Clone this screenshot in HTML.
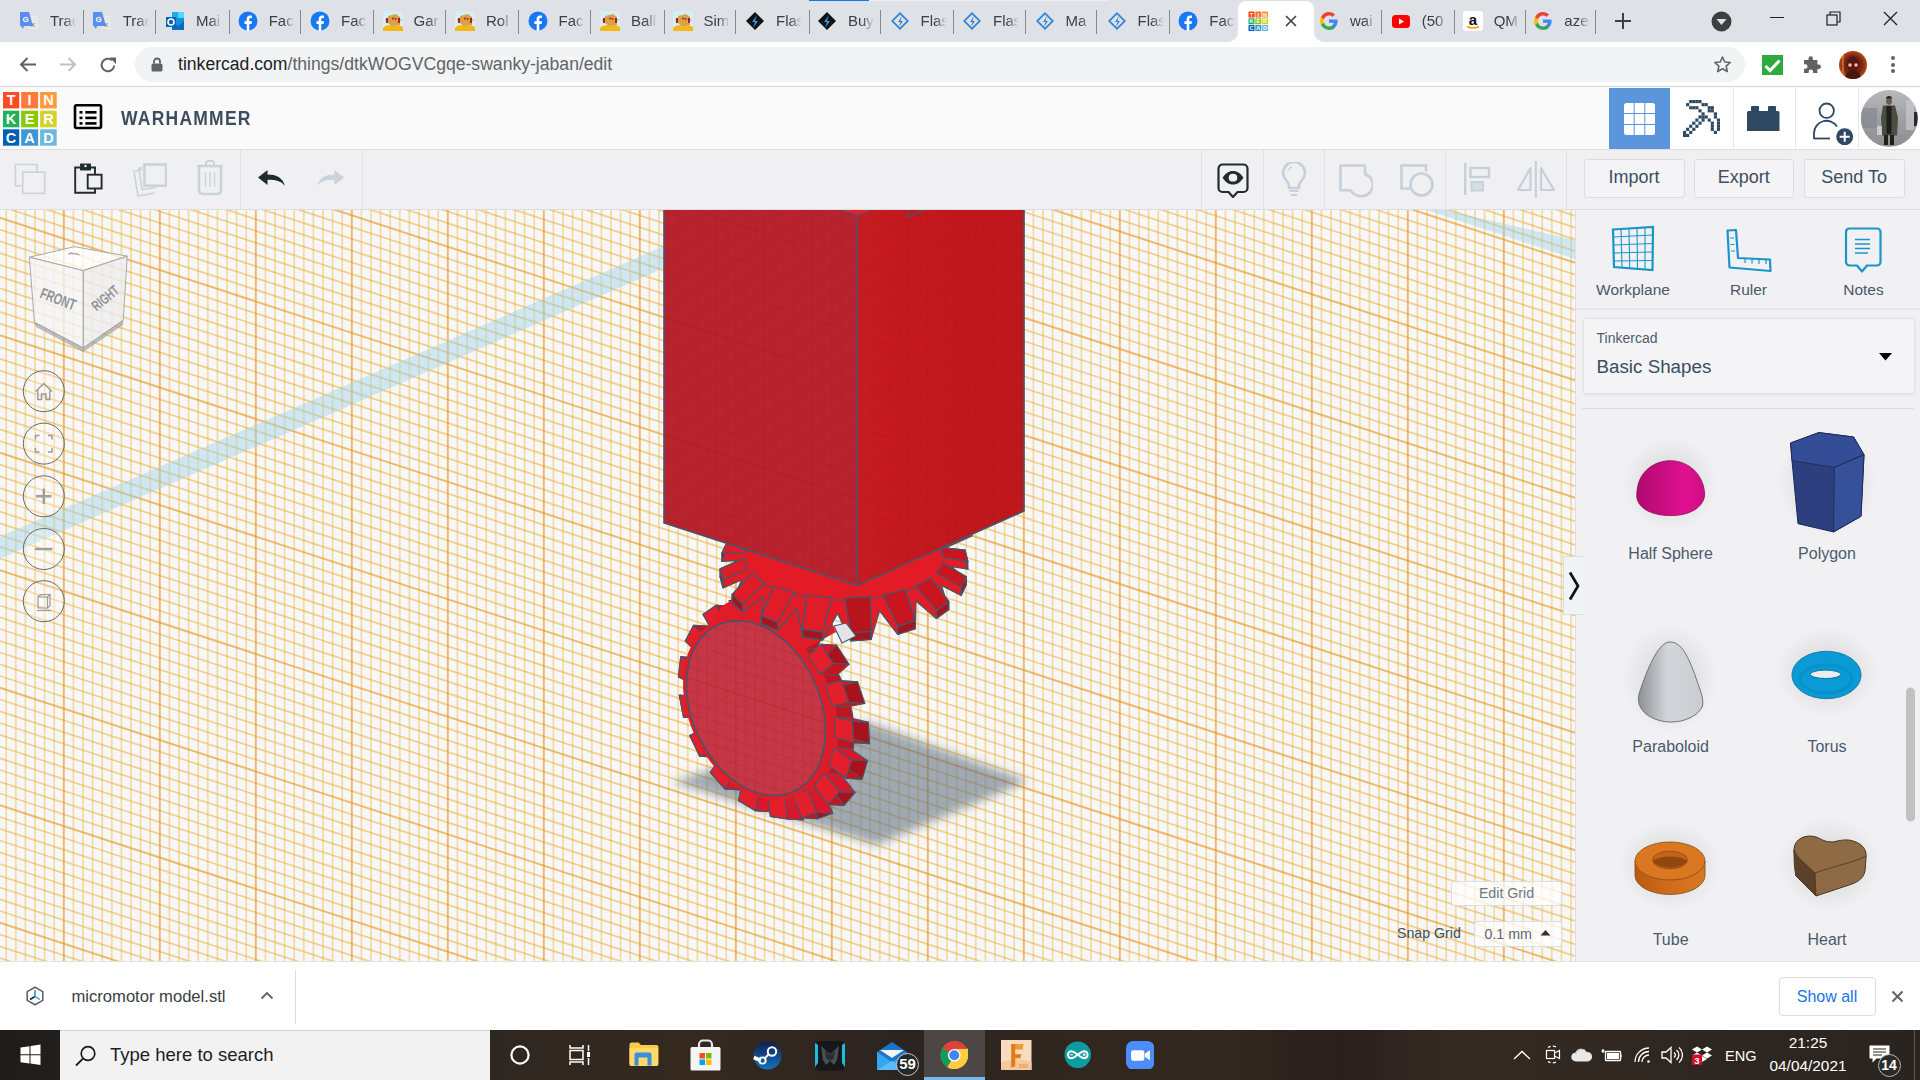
<!DOCTYPE html>
<html><head><meta charset="utf-8">
<style>
*{box-sizing:border-box}
html,body{margin:0;padding:0;width:1920px;height:1080px;overflow:hidden;background:#fff;font-family:"Liberation Sans",sans-serif;position:relative}
.abs{position:absolute}
#tabs{position:absolute;left:0;top:0;width:1920px;height:42px;background:#DEE1E6}
.tab{position:absolute;top:0;height:42px}
.tab .ic{position:absolute;left:9px;top:11px;width:20px;height:20px}
.tab .tx{position:absolute;left:40px;top:12px;font-size:15px;color:#3C4043;white-space:nowrap;width:26px;overflow:hidden;
 -webkit-mask-image:linear-gradient(90deg,#000 55%,transparent 100%)}
.sep{position:absolute;top:10px;width:1px;height:24px;background:#868A8E}
#omni{position:absolute;left:0;top:42px;width:1920px;height:45px;background:#fff;border-bottom:1px solid #D3D5D9}
#tch{position:absolute;left:0;top:88px;width:1920px;height:62px;background:#FAFAFA;border-bottom:1px solid #DDDFE3;box-shadow:0 1px 3px rgba(0,0,0,0.08)}
#tbar{position:absolute;left:0;top:150px;width:1920px;height:60px;background:#F0F0F3;border-bottom:1px solid #DCDDE2}
#vp{position:absolute;left:0;top:210px;width:1575px;height:751px;overflow:hidden}
#rp{position:absolute;left:1575px;top:210px;width:345px;height:751px;background:#F1F1F4;border-left:1px solid #E0E0E4;overflow:hidden}
#dl{position:absolute;left:0;top:961px;width:1920px;height:69px;background:#fff;border-top:1px solid #E3E3E3}
#task{position:absolute;left:0;top:1030px;width:1920px;height:50px;background:linear-gradient(90deg,#1F1C1A 0px,#221E1B 60px,#2E2620 490px,#35291F 700px,#2C2420 900px,#33281F 1200px,#2A211E 1340px,#342A22 1460px,#2E2620 1700px,#2A2420 1920px)}
</style></head><body>
<style>
.btn{position:absolute;border:1px solid #DCDDE2;border-radius:3px;background:#F4F4F6;color:#3D4D60;font-size:18px;text-align:center;line-height:34px;white-space:nowrap}
.lbl{font-size:15.5px;color:#4A5868;text-align:center;line-height:20px;white-space:nowrap}
.lbl2{font-size:16px;color:#4A5A6B;text-align:center;line-height:20px;white-space:nowrap}
</style>
<div id="tabs">
<svg class="abs" style="left:1226px;top:0" width="100" height="42" viewBox="0 0 100 42"><path d="M0 42c8 0 12-4 12-12V10C12 4 15 1 21 1h58c6 0 9 3 9 9v20c0 8 4 12 12 12z" fill="#fff"/></svg>
<div class="abs" style="left:868.5px;top:0;width:240.5px;height:1px;background:#EDEEF0"></div>
<div class="abs" style="left:809px;top:0;width:59.5px;height:1.2px;background:#1A73E8"></div>
<div class="tab" style="left:10.0px;width:60px"><svg class="ic" viewBox="0 0 20 20"><rect x="9" y="5" width="10" height="13" fill="#E8E8E8"/><text x="14" y="16" font-size="8" fill="#777" text-anchor="middle" font-family="Liberation Sans">x</text><path d="M1 1h9l4 14H5l-1 3-2-3H1z" fill="#5A8DEE"/><text x="6.5" y="11" font-size="8" font-weight="bold" fill="#fff" text-anchor="middle" font-family="Liberation Sans">G</text></svg><div class="tx">Trac</div></div>
<div class="tab" style="left:82.7px;width:60px"><svg class="ic" viewBox="0 0 20 20"><rect x="9" y="5" width="10" height="13" fill="#E8E8E8"/><text x="14" y="16" font-size="8" fill="#777" text-anchor="middle" font-family="Liberation Sans">x</text><path d="M1 1h9l4 14H5l-1 3-2-3H1z" fill="#5A8DEE"/><text x="6.5" y="11" font-size="8" font-weight="bold" fill="#fff" text-anchor="middle" font-family="Liberation Sans">G</text></svg><div class="tx">Trac</div></div>
<div class="tab" style="left:156.0px;width:60px"><svg class="ic" viewBox="0 0 20 20"><rect x="7" y="1" width="12" height="18" fill="#1490DF"/><rect x="13" y="1" width="6" height="6" fill="#50D9FF"/><rect x="7" y="1" width="6" height="6" fill="#28A8EA"/><path d="M7 10l6 5 6-5v9H7z" fill="#0A6CC2"/><rect x="1" y="6" width="10" height="10" fill="#0364B8"/><circle cx="6" cy="11" r="3" fill="none" stroke="#fff" stroke-width="1.6"/></svg><div class="tx">Mai</div></div>
<div class="tab" style="left:228.7px;width:60px"><svg class="ic" viewBox="0 0 20 20"><circle cx="10" cy="10" r="9.5" fill="#1877F2"/><path d="M11.3 20v-7h2.3l.4-2.8h-2.7V8.5c0-.8.3-1.4 1.4-1.4H14V4.6c-.3 0-1.1-.1-2-.1-2 0-3.4 1.2-3.4 3.5v2.2H6.4V13h2.3v7z" fill="#fff"/></svg><div class="tx">Fac</div></div>
<div class="tab" style="left:301.0px;width:60px"><svg class="ic" viewBox="0 0 20 20"><circle cx="10" cy="10" r="9.5" fill="#1877F2"/><path d="M11.3 20v-7h2.3l.4-2.8h-2.7V8.5c0-.8.3-1.4 1.4-1.4H14V4.6c-.3 0-1.1-.1-2-.1-2 0-3.4 1.2-3.4 3.5v2.2H6.4V13h2.3v7z" fill="#fff"/></svg><div class="tx">Fac</div></div>
<div class="tab" style="left:373.6px;width:60px"><svg class="ic" viewBox="0 0 20 20"><rect x="0" y="0" width="20" height="20" rx="3" fill="#D6EEF8"/><path d="M0 17c3-4 15-4 20-1v4H0z" fill="#F4B71A"/><path d="M5 5l8-2 4 3 0 8-8 1-4-3z" fill="#D8A24A"/><circle cx="10" cy="7.5" r="1" fill="#B22"/><circle cx="12.5" cy="8" r="1" fill="#B22"/><path d="M2 9h3M15 9h4" stroke="#999" stroke-width="0.8"/><path d="M3 7v5h2V7z" fill="#B01E1E"/><path d="M15 7v5h2V7z" fill="#B01E1E"/></svg><div class="tx">Gar</div></div>
<div class="tab" style="left:446.0px;width:60px"><svg class="ic" viewBox="0 0 20 20"><rect x="0" y="0" width="20" height="20" rx="3" fill="#D6EEF8"/><path d="M0 17c3-4 15-4 20-1v4H0z" fill="#F4B71A"/><path d="M5 5l8-2 4 3 0 8-8 1-4-3z" fill="#D8A24A"/><circle cx="10" cy="7.5" r="1" fill="#B22"/><circle cx="12.5" cy="8" r="1" fill="#B22"/><path d="M2 9h3M15 9h4" stroke="#999" stroke-width="0.8"/><path d="M3 7v5h2V7z" fill="#B01E1E"/><path d="M15 7v5h2V7z" fill="#B01E1E"/></svg><div class="tx">Rol</div></div>
<div class="tab" style="left:518.5px;width:60px"><svg class="ic" viewBox="0 0 20 20"><circle cx="10" cy="10" r="9.5" fill="#1877F2"/><path d="M11.3 20v-7h2.3l.4-2.8h-2.7V8.5c0-.8.3-1.4 1.4-1.4H14V4.6c-.3 0-1.1-.1-2-.1-2 0-3.4 1.2-3.4 3.5v2.2H6.4V13h2.3v7z" fill="#fff"/></svg><div class="tx">Fac</div></div>
<div class="tab" style="left:591.0px;width:60px"><svg class="ic" viewBox="0 0 20 20"><rect x="0" y="0" width="20" height="20" rx="3" fill="#D6EEF8"/><path d="M0 17c3-4 15-4 20-1v4H0z" fill="#F4B71A"/><path d="M5 5l8-2 4 3 0 8-8 1-4-3z" fill="#D8A24A"/><circle cx="10" cy="7.5" r="1" fill="#B22"/><circle cx="12.5" cy="8" r="1" fill="#B22"/><path d="M2 9h3M15 9h4" stroke="#999" stroke-width="0.8"/><path d="M3 7v5h2V7z" fill="#B01E1E"/><path d="M15 7v5h2V7z" fill="#B01E1E"/></svg><div class="tx">Ball</div></div>
<div class="tab" style="left:663.5px;width:60px"><svg class="ic" viewBox="0 0 20 20"><rect x="0" y="0" width="20" height="20" rx="3" fill="#D6EEF8"/><path d="M0 17c3-4 15-4 20-1v4H0z" fill="#F4B71A"/><path d="M5 5l8-2 4 3 0 8-8 1-4-3z" fill="#D8A24A"/><circle cx="10" cy="7.5" r="1" fill="#B22"/><circle cx="12.5" cy="8" r="1" fill="#B22"/><path d="M2 9h3M15 9h4" stroke="#999" stroke-width="0.8"/><path d="M3 7v5h2V7z" fill="#B01E1E"/><path d="M15 7v5h2V7z" fill="#B01E1E"/></svg><div class="tx">Sim</div></div>
<div class="tab" style="left:736.0px;width:60px"><svg class="ic" viewBox="0 0 20 20"><path d="M10 1l9 9-9 9-9-9z" fill="#111"/><path d="M12 4l-5 7h3l-2 6 5-7h-3z" fill="#3A9BE8"/></svg><div class="tx">Flas</div></div>
<div class="tab" style="left:808.0px;width:60px"><svg class="ic" viewBox="0 0 20 20"><path d="M10 1l9 9-9 9-9-9z" fill="#111"/><path d="M12 4l-5 7h3l-2 6 5-7h-3z" fill="#3A9BE8"/></svg><div class="tx">Buy</div></div>
<div class="tab" style="left:880.5px;width:60px"><svg class="ic" viewBox="0 0 20 20"><path d="M10 1l9 9-9 9-9-9z" fill="#2F86D6"/><path d="M10 3.5l6.5 6.5-6.5 6.5-6.5-6.5z" fill="#DEE1E6"/><path d="M12 5l-4 6h2.5l-1.5 5 4-6h-2.5z" fill="#2F86D6"/></svg><div class="tx">Flas</div></div>
<div class="tab" style="left:953.0px;width:60px"><svg class="ic" viewBox="0 0 20 20"><path d="M10 1l9 9-9 9-9-9z" fill="#2F86D6"/><path d="M10 3.5l6.5 6.5-6.5 6.5-6.5-6.5z" fill="#DEE1E6"/><path d="M12 5l-4 6h2.5l-1.5 5 4-6h-2.5z" fill="#2F86D6"/></svg><div class="tx">Flas</div></div>
<div class="tab" style="left:1025.6px;width:60px"><svg class="ic" viewBox="0 0 20 20"><path d="M10 1l9 9-9 9-9-9z" fill="#2F86D6"/><path d="M10 3.5l6.5 6.5-6.5 6.5-6.5-6.5z" fill="#DEE1E6"/><path d="M12 5l-4 6h2.5l-1.5 5 4-6h-2.5z" fill="#2F86D6"/></svg><div class="tx">Ma</div></div>
<div class="tab" style="left:1097.5px;width:60px"><svg class="ic" viewBox="0 0 20 20"><path d="M10 1l9 9-9 9-9-9z" fill="#2F86D6"/><path d="M10 3.5l6.5 6.5-6.5 6.5-6.5-6.5z" fill="#DEE1E6"/><path d="M12 5l-4 6h2.5l-1.5 5 4-6h-2.5z" fill="#2F86D6"/></svg><div class="tx">Flas</div></div>
<div class="tab" style="left:1169.3px;width:60px"><svg class="ic" viewBox="0 0 20 20"><circle cx="10" cy="10" r="9.5" fill="#1877F2"/><path d="M11.3 20v-7h2.3l.4-2.8h-2.7V8.5c0-.8.3-1.4 1.4-1.4H14V4.6c-.3 0-1.1-.1-2-.1-2 0-3.4 1.2-3.4 3.5v2.2H6.4V13h2.3v7z" fill="#fff"/></svg><div class="tx">Fac</div></div>
<div class="tab" style="left:1239px;width:60px"><svg class="ic" viewBox="0 0 20 20"><rect x="0.5" y="0.5" width="6" height="6" rx="0.6" fill="#F73A14"/><text x="3.5" y="5.5" font-size="5.6" font-weight="bold" fill="#fff" text-anchor="middle" font-family="Liberation Sans">T</text><rect x="7.3" y="0.5" width="6" height="6" rx="0.6" fill="#FF6F2A"/><text x="10.3" y="5.5" font-size="5.6" font-weight="bold" fill="#fff" text-anchor="middle" font-family="Liberation Sans">I</text><rect x="14.1" y="0.5" width="6" height="6" rx="0.6" fill="#FF9430"/><text x="17.1" y="5.5" font-size="5.6" font-weight="bold" fill="#fff" text-anchor="middle" font-family="Liberation Sans">N</text><rect x="0.5" y="7.3" width="6" height="6" rx="0.6" fill="#1DAE58"/><text x="3.5" y="12.3" font-size="5.6" font-weight="bold" fill="#fff" text-anchor="middle" font-family="Liberation Sans">K</text><rect x="7.3" y="7.3" width="6" height="6" rx="0.6" fill="#88C900"/><text x="10.3" y="12.3" font-size="5.6" font-weight="bold" fill="#fff" text-anchor="middle" font-family="Liberation Sans">E</text><rect x="14.1" y="7.3" width="6" height="6" rx="0.6" fill="#CCD31E"/><text x="17.1" y="12.3" font-size="5.6" font-weight="bold" fill="#fff" text-anchor="middle" font-family="Liberation Sans">R</text><rect x="0.5" y="14.1" width="6" height="6" rx="0.6" fill="#0059B5"/><text x="3.5" y="19.1" font-size="5.6" font-weight="bold" fill="#fff" text-anchor="middle" font-family="Liberation Sans">C</text><rect x="7.3" y="14.1" width="6" height="6" rx="0.6" fill="#3D94D6"/><text x="10.3" y="19.1" font-size="5.6" font-weight="bold" fill="#fff" text-anchor="middle" font-family="Liberation Sans">A</text><rect x="14.1" y="14.1" width="6" height="6" rx="0.6" fill="#5EB5E3"/><text x="17.1" y="19.1" font-size="5.6" font-weight="bold" fill="#fff" text-anchor="middle" font-family="Liberation Sans">D</text></svg></div>
<svg class="abs" style="left:1284px;top:14px" width="14" height="14" viewBox="0 0 14 14"><path d="M2 2l10 10M12 2L2 12" stroke="#3C4043" stroke-width="1.6"/></svg>
<div class="tab" style="left:1310.0px;width:60px"><svg class="ic" viewBox="0 0 20 20"><path d="M18.6 10.2c0-.6-.1-1.2-.2-1.7H10v3.3h4.8c-.2 1.1-.8 2-1.8 2.6v2.2h2.9c1.7-1.6 2.7-3.9 2.7-6.4z" fill="#4285F4"/><path d="M10 19c2.4 0 4.5-.8 5.9-2.2L13 14.6c-.8.5-1.8.9-3 .9-2.3 0-4.3-1.6-5-3.7H2v2.3C3.5 17 6.5 19 10 19z" fill="#34A853"/><path d="M5 11.8c-.2-.5-.3-1.1-.3-1.8s.1-1.2.3-1.8V5.9H2C1.4 7.1 1 8.5 1 10s.4 2.9 1 4.1z" fill="#FBBC05"/><path d="M10 4.6c1.3 0 2.5.5 3.4 1.3L16 3.4C14.5 1.9 12.4 1 10 1 6.5 1 3.5 3 2 5.9l3 2.3c.7-2.1 2.7-3.6 5-3.6z" fill="#EA4335"/></svg><div class="tx">wai</div></div>
<div class="tab" style="left:1381.7px;width:60px"><svg class="ic" viewBox="0 0 20 20"><rect x="1" y="4" width="18" height="13" rx="3.5" fill="#F00"/><path d="M8 7.5v6l5-3z" fill="#fff"/></svg><div class="tx">(50</div></div>
<div class="tab" style="left:1453.7px;width:60px"><svg class="ic" viewBox="0 0 20 20"><rect x="0" y="0" width="20" height="20" rx="3" fill="#fff"/><text x="10" y="13.5" font-size="15" font-weight="bold" fill="#111" text-anchor="middle" font-family="Liberation Sans">a</text><path d="M4 15.5q6 3 12 0" stroke="#F90" stroke-width="1.6" fill="none"/></svg><div class="tx">QM</div></div>
<div class="tab" style="left:1524.3px;width:60px"><svg class="ic" viewBox="0 0 20 20"><path d="M18.6 10.2c0-.6-.1-1.2-.2-1.7H10v3.3h4.8c-.2 1.1-.8 2-1.8 2.6v2.2h2.9c1.7-1.6 2.7-3.9 2.7-6.4z" fill="#4285F4"/><path d="M10 19c2.4 0 4.5-.8 5.9-2.2L13 14.6c-.8.5-1.8.9-3 .9-2.3 0-4.3-1.6-5-3.7H2v2.3C3.5 17 6.5 19 10 19z" fill="#34A853"/><path d="M5 11.8c-.2-.5-.3-1.1-.3-1.8s.1-1.2.3-1.8V5.9H2C1.4 7.1 1 8.5 1 10s.4 2.9 1 4.1z" fill="#FBBC05"/><path d="M10 4.6c1.3 0 2.5.5 3.4 1.3L16 3.4C14.5 1.9 12.4 1 10 1 6.5 1 3.5 3 2 5.9l3 2.3c.7-2.1 2.7-3.6 5-3.6z" fill="#EA4335"/></svg><div class="tx">aze</div></div>
<div class="sep" style="left:82.8px"></div>
<div class="sep" style="left:155.2px"></div>
<div class="sep" style="left:228.5px"></div>
<div class="sep" style="left:300.2px"></div>
<div class="sep" style="left:372.8px"></div>
<div class="sep" style="left:445.2px"></div>
<div class="sep" style="left:517.8px"></div>
<div class="sep" style="left:590.2px"></div>
<div class="sep" style="left:663.5px"></div>
<div class="sep" style="left:735.2px"></div>
<div class="sep" style="left:808.5px"></div>
<div class="sep" style="left:880.2px"></div>
<div class="sep" style="left:952.8px"></div>
<div class="sep" style="left:1025.2px"></div>
<div class="sep" style="left:1096.2px"></div>
<div class="sep" style="left:1168.5px"></div>
<div class="sep" style="left:1381.2px"></div>
<div class="sep" style="left:1453.5px"></div>
<div class="sep" style="left:1524.5px"></div>
<div class="sep" style="left:1594.5px"></div>
<svg class="abs" style="left:1613px;top:11px" width="20" height="20" viewBox="0 0 20 20"><path d="M10 2v16M2 10h16" stroke="#3C4043" stroke-width="2"/></svg>
<svg class="abs" style="left:1711px;top:11px" width="21" height="21" viewBox="0 0 21 21"><circle cx="10.5" cy="10.5" r="10" fill="#3C4043"/><path d="M5.5 8h10l-5 6z" fill="#DEE1E6"/></svg>
<div class="abs" style="left:1770px;top:17px;width:14px;height:1px;background:#202124"></div>
<svg class="abs" style="left:1826px;top:11px" width="15" height="15" viewBox="0 0 15 15"><rect x="1" y="4" width="10" height="10" fill="none" stroke="#202124" stroke-width="1.2"/><path d="M4 4V1h10v10h-3" fill="none" stroke="#202124" stroke-width="1.2"/></svg>
<svg class="abs" style="left:1883px;top:11px" width="15" height="15" viewBox="0 0 15 15"><path d="M1 1l13 13M14 1L1 14" stroke="#202124" stroke-width="1.3"/></svg>
</div><div id="omni">
<svg class="abs" style="left:19px;top:14px" width="18" height="17" viewBox="0 0 18 17"><path d="M17 8.5H2.5M8.5 2L2 8.5 8.5 15" fill="none" stroke="#5F6368" stroke-width="2"/></svg>
<svg class="abs" style="left:59px;top:14px" width="18" height="17" viewBox="0 0 18 17"><path d="M1 8.5h14.5M9.5 2L16 8.5 9.5 15" fill="none" stroke="#BDC1C6" stroke-width="2"/></svg>
<svg class="abs" style="left:99px;top:14px" width="18" height="18" viewBox="0 0 18 18"><path d="M15.2 9.5A6.3 6.3 0 1 1 13 4.2" fill="none" stroke="#5F6368" stroke-width="2"/><path d="M10.5 1.5h6.5v6.5z" fill="#5F6368"/></svg>
<div class="abs" style="left:135px;top:5px;width:1610px;height:35px;border-radius:17.5px;background:#F1F3F4"></div>
<svg class="abs" style="left:151px;top:15px" width="12" height="15" viewBox="0 0 12 15"><path d="M3 6.5V4.5a3 3 0 0 1 6 0v2" fill="none" stroke="#5F6368" stroke-width="1.8"/><rect x="0.5" y="6.5" width="11" height="8" rx="1.5" fill="#5F6368"/></svg>
<div class="abs" style="left:178px;top:10px;font-size:17.6px;color:#5F6368;white-space:nowrap;line-height:24px"><span style="color:#202124">tinkercad.com</span>/things/dtkWOGVCgqe-swanky-jaban/edit</div>
<svg class="abs" style="left:1713px;top:13px" width="19" height="19" viewBox="0 0 24 24"><path d="M12 2.5l2.9 6.3 6.9.7-5.2 4.6 1.5 6.8L12 17.4l-6.1 3.5 1.5-6.8-5.2-4.6 6.9-.7z" fill="none" stroke="#5F6368" stroke-width="2" stroke-linejoin="round"/></svg>
<div class="abs" style="left:1762px;top:12.5px;width:20.5px;height:20.5px;background:#2DAA3C"></div>
<svg class="abs" style="left:1762px;top:12.5px" width="21" height="21" viewBox="0 0 21 21"><path d="M3.5 11l4.5 4.5 9.5-10" fill="none" stroke="#fff" stroke-width="3"/></svg>
<svg class="abs" style="left:1803px;top:13px" width="19" height="19" viewBox="0 0 19 19"><path d="M1 5h4.5V3.5a2.2 2.2 0 0 1 4.4 0V5h4.5v4.5h1.4a2.2 2.2 0 0 1 0 4.4h-1.4V18H10v-1.4a2.2 2.2 0 0 0-4.4 0V18H1v-4.3h1.3a2.2 2.2 0 0 0 0-4.4H1z" fill="#5F6368"/></svg>
<svg class="abs" style="left:1839px;top:8.7px" width="28" height="28" viewBox="0 0 28 28"><defs><clipPath id="pav"><circle cx="14" cy="14" r="14"/></clipPath><radialGradient id="pavg" cx="0.5" cy="0.5" r="0.6"><stop offset="0" stop-color="#5A1A12"/><stop offset="0.55" stop-color="#7A2414"/><stop offset="1" stop-color="#D8641E"/></radialGradient></defs><g clip-path="url(#pav)"><rect width="28" height="28" fill="url(#pavg)"/><rect x="3" y="4" width="2" height="20" fill="#E88A2A" opacity="0.6"/><path d="M6 28c1-7 4-9 8-9s7 2 8 9z" fill="#4A1410"/><ellipse cx="14" cy="13" rx="6" ry="7.5" fill="#4E1A14"/><circle cx="11" cy="14" r="2" fill="#FF6A50"/><circle cx="17" cy="14" r="2" fill="#FF6A50"/><circle cx="11" cy="14" r="1" fill="#FFE0D0"/><circle cx="17" cy="14" r="1" fill="#FFE0D0"/></g></svg>
<div class="abs" style="left:1890.5px;top:14px;width:4px;height:4px;border-radius:50%;background:#5F6368"></div>
<div class="abs" style="left:1890.5px;top:20.7px;width:4px;height:4px;border-radius:50%;background:#5F6368"></div>
<div class="abs" style="left:1890.5px;top:27px;width:4px;height:4px;border-radius:50%;background:#5F6368"></div>
</div>
<div id="tch">
<svg class="abs" style="left:3px;top:4px" width="54" height="54" viewBox="0 0 54 54">
<g font-family="Liberation Sans" font-weight="bold" font-size="14.5" fill="#fff" text-anchor="middle">
<rect x="0" y="0" width="16.2" height="16.4" fill="#FF4A24"/><rect x="18.2" y="0" width="16.9" height="16.4" fill="#FF7A3A"/><rect x="37.1" y="0" width="16.6" height="16.4" fill="#FF9B38"/>
<rect x="0" y="18.7" width="16.2" height="16.6" fill="#20B15A"/><rect x="18.2" y="18.7" width="16.9" height="16.6" fill="#8CC800"/><rect x="37.1" y="18.7" width="16.6" height="16.6" fill="#D2D32C"/>
<rect x="0" y="37.3" width="16.2" height="16.4" fill="#0061B2"/><rect x="18.2" y="37.3" width="16.9" height="16.4" fill="#3D97D3"/><rect x="37.1" y="37.3" width="16.6" height="16.4" fill="#6CB9E0"/>
<text x="8.1" y="13.4">T</text><text x="26.6" y="13.4">I</text><text x="45.4" y="13.4">N</text>
<text x="8.1" y="32.2">K</text><text x="26.6" y="32.2">E</text><text x="45.4" y="32.2">R</text>
<text x="8.1" y="50.6">C</text><text x="26.6" y="50.6">A</text><text x="45.4" y="50.6">D</text>
</g></svg>
<svg class="abs" style="left:73px;top:15px" width="30" height="27" viewBox="0 0 30 27">
<rect x="2" y="2.2" width="26" height="22.8" rx="1.5" fill="none" stroke="#000" stroke-width="2.6"/>
<rect x="6.5" y="8" width="3" height="2.6" fill="#000"/><rect x="12.3" y="8" width="11.2" height="2.6" fill="#000"/>
<rect x="6.5" y="13.6" width="3" height="2.6" fill="#000"/><rect x="12.3" y="13.6" width="11.2" height="2.6" fill="#000"/>
<rect x="6.5" y="19.1" width="3" height="2.6" fill="#000"/><rect x="12.3" y="19.1" width="11.2" height="2.6" fill="#000"/>
</svg>
<div id="title" class="abs" style="left:120.5px;top:17.6px;font-size:20.6px;font-weight:bold;color:#3D4D60;letter-spacing:1.45px;white-space:nowrap;line-height:24px;transform:scaleX(0.85);transform-origin:0 0">WARHAMMER</div>
<div class="abs" style="left:1609px;top:0;width:61px;height:61px;background:#5B95DB"></div>
<div class="abs" style="left:1670px;top:0;width:250px;height:61px;background:#fff"></div>
<svg class="abs" style="left:1624px;top:14.5px" width="31" height="32" viewBox="0 0 31 32"><defs><clipPath id="gc"><rect width="31" height="32" rx="2.5"/></clipPath></defs><g clip-path="url(#gc)" fill="#fff">
<rect x="0" y="0" width="9.7" height="10"/><rect x="10.7" y="0" width="9.6" height="10"/><rect x="21.3" y="0" width="9.7" height="10"/>
<rect x="0" y="11" width="9.7" height="10"/><rect x="10.7" y="11" width="9.6" height="10"/><rect x="21.3" y="11" width="9.7" height="10"/>
<rect x="0" y="22" width="9.7" height="10"/><rect x="10.7" y="22" width="9.6" height="10"/><rect x="21.3" y="22" width="9.7" height="10"/></g></svg>
<svg class="abs" style="left:1683.3px;top:12.2px" width="37" height="37" viewBox="0 0 12 12" fill="#2F4963"><rect x="2" y="0" width="1.02" height="1.02"/><rect x="3" y="0" width="1.02" height="1.02"/><rect x="4" y="0" width="1.02" height="1.02"/><rect x="5" y="0" width="1.02" height="1.02"/><rect x="1" y="1" width="1.02" height="1.02"/><rect x="6" y="1" width="1.02" height="1.02"/><rect x="7" y="1" width="1.02" height="1.02"/><rect x="2" y="2" width="1.02" height="1.02"/><rect x="3" y="2" width="1.02" height="1.02"/><rect x="4" y="2" width="1.02" height="1.02"/><rect x="8" y="2" width="1.02" height="1.02"/><rect x="9" y="2" width="1.02" height="1.02"/><rect x="8" y="3" width="1.02" height="1.02"/><rect x="9" y="3" width="1.02" height="1.02"/><rect x="5" y="3" width="1.02" height="1.02"/><rect x="6" y="4" width="1.02" height="1.02"/><rect x="6" y="5" width="1.02" height="1.02"/><rect x="6" y="6" width="1.02" height="1.02"/><rect x="5" y="5" width="1.02" height="1.02"/><rect x="7" y="5" width="1.02" height="1.02"/><rect x="10" y="4" width="1.02" height="1.02"/><rect x="10" y="5" width="1.02" height="1.02"/><rect x="4" y="6" width="1.02" height="1.02"/><rect x="8" y="6" width="1.02" height="1.02"/><rect x="3" y="7" width="1.02" height="1.02"/><rect x="5" y="7" width="1.02" height="1.02"/><rect x="9" y="7" width="1.02" height="1.02"/><rect x="9" y="8" width="1.02" height="1.02"/><rect x="9" y="9" width="1.02" height="1.02"/><rect x="11" y="6" width="1.02" height="1.02"/><rect x="11" y="7" width="1.02" height="1.02"/><rect x="11" y="8" width="1.02" height="1.02"/><rect x="11" y="9" width="1.02" height="1.02"/><rect x="2" y="8" width="1.02" height="1.02"/><rect x="4" y="8" width="1.02" height="1.02"/><rect x="1" y="9" width="1.02" height="1.02"/><rect x="3" y="9" width="1.02" height="1.02"/><rect x="10" y="10" width="1.02" height="1.02"/><rect x="0" y="10" width="1.02" height="1.02"/><rect x="0" y="11" width="1.02" height="1.02"/><rect x="1" y="11" width="1.02" height="1.02"/><rect x="2" y="10" width="1.02" height="1.02"/></svg>
<svg class="abs" style="left:1747px;top:18px" width="33" height="26" viewBox="0 0 33 26" fill="#2F4963"><path d="M5 0h6a1 1 0 0 1 1 1v4h9V1a1 1 0 0 1 1-1h6a1 1 0 0 1 1 1v4h2a1.5 1.5 0 0 1 1.5 1.5V25H0V6.5A1.5 1.5 0 0 1 1.5 5H4V1a1 1 0 0 1 1-1z"/></svg>
<svg class="abs" style="left:1812px;top:13px" width="42" height="44" viewBox="0 0 42 44">
<circle cx="14.7" cy="9.7" r="7.2" fill="none" stroke="#2F4963" stroke-width="1.8"/>
<path d="M2 38V32a12.5 12.5 0 0 1 23-6.5" fill="none" stroke="#2F4963" stroke-width="1.8"/><path d="M2 37.5h16" stroke="#2F4963" stroke-width="1.8"/>
<circle cx="32.7" cy="35.8" r="8.5" fill="#2F4963"/><path d="M32.7 30.8v10M27.7 35.8h10" stroke="#fff" stroke-width="2"/>
</svg>
<div class="abs" style="left:1733px;top:0;width:1px;height:61px;background:#E4E6EA"></div>
<div class="abs" style="left:1795px;top:0;width:1px;height:61px;background:#E4E6EA"></div>
<div class="abs" style="left:1858px;top:0;width:1px;height:61px;background:#E4E6EA"></div>
<svg class="abs" style="left:1860px;top:1px" width="60" height="60" viewBox="1860 89 60 60"><defs><clipPath id="avc"><circle cx="1889.3" cy="118.4" r="28.4"/></clipPath><linearGradient id="avg" x1="0" y1="0" x2="0" y2="1"><stop offset="0" stop-color="#B8B9BC"/><stop offset="0.55" stop-color="#9C9EA3"/><stop offset="1" stop-color="#8E8C8C"/></linearGradient></defs>
<g clip-path="url(#avc)"><rect x="1860" y="89" width="60" height="60" fill="url(#avg)"/>
<rect x="1861" y="108" width="16" height="20" fill="#7F848C" opacity="0.6"/><rect x="1906" y="100" width="8" height="30" fill="#C8CACC" opacity="0.7"/><rect x="1914" y="112" width="4" height="14" fill="#2A2A2C"/>
<path d="M1883 105.5h12l3 12 -1 18h-4v9h-3v-9h-2v9h-3v-9h-3l-1-18z" fill="#4B4D40"/><path d="M1886.5 106h5v28h-5z" fill="#1E1F1C"/><path d="M1884 135h4v10h-4zM1890 135h4v10h-4z" fill="#1E1F1C"/><ellipse cx="1889" cy="101" rx="3" ry="3.8" fill="#6A5C52"/><path d="M1886 98.5a3 2.5 0 0 1 6 0z" fill="#2A2420"/>
<rect x="1877" y="126" width="5" height="9" fill="#D8D8DA" opacity="0.8"/></g></svg>
</div>
<div id="tbar">
<svg class="abs" style="left:14px;top:13px" width="32" height="32" viewBox="0 0 32 32" fill="none" stroke="#C8D3DC" stroke-width="1.6"><path d="M23 9V1.5H1.5V22.7H8.7"/><rect x="8.7" y="9.2" width="22" height="21.2"/></svg>
<svg class="abs" style="left:74px;top:13px" width="30" height="32" viewBox="0 0 30 32" fill="none" stroke="#1F2B2D" stroke-width="1.9"><path d="M7 4.5H1.2v25.3h19.8V25"/><path d="M16 4.5h5v7"/><rect x="7" y="1.5" width="9" height="5" fill="#1F2B2D"/><circle cx="11.5" cy="3" r="1.2" fill="#F0F0F3" stroke="none"/><rect x="13.7" y="11.7" width="13.9" height="13.8"/></svg>
<svg class="abs" style="left:133px;top:13px" width="34" height="34" viewBox="0 0 34 34" fill="none" stroke="#C8D3DC"><rect x="11.5" y="1.5" width="21.5" height="21.2" stroke-width="2.6"/><path d="M9 6.5L1 8.5l4 24.5 17-3" stroke-width="1.6"/><path d="M9.5 4.5L6 5.5l3 21 14-2" stroke-width="1.6"/></svg>
<svg class="abs" style="left:196px;top:10px" width="28" height="36" viewBox="0 0 28 36" fill="none" stroke="#C8D3DC"><path d="M1 6h26" stroke-width="2.6"/><path d="M10 5V3a2.5 2.5 0 0 1 2.5-2h3A2.5 2.5 0 0 1 18 3v2" stroke-width="1.8"/><path d="M3 7v23.5a3.5 3.5 0 0 0 3.5 3.5h15a3.5 3.5 0 0 0 3.5-3.5V7" stroke-width="2.6"/><path d="M9.5 12v15M14 12v15M18.5 12v15" stroke-width="1.4"/></svg>
<div class="abs" style="left:240px;top:0;width:1px;height:60px;background:#DEE1E5"></div>
<svg class="abs" style="left:258px;top:20px" width="27" height="16" viewBox="0 0 27 16"><path d="M0 7.5L9.5 0v4.5c9 0 15 3 17.5 11.5-3.5-4.5-8-6.2-17.5-6.2V15z" fill="#1F2B2D"/></svg>
<svg class="abs" style="left:317px;top:20px" width="27" height="16" viewBox="0 0 27 16"><path d="M27 7.5L17.5 0v4.5C8.5 4.5 2.5 7.5 0 16c3.5-4.5 8-6.2 17.5-6.2V15z" fill="#C8D3DC"/></svg>
<div class="abs" style="left:362px;top:0;width:1px;height:60px;background:#DEE1E5"></div>
<div class="abs" style="left:1201px;top:0;width:1px;height:60px;background:#DEE1E5"></div>
<svg class="abs" style="left:1217px;top:13px" width="32" height="36" viewBox="0 0 32 36"><path d="M5.5 1.5h21a4 4 0 0 1 4 4v19.5a4 4 0 0 1-4 4h-6L16 34l-4.5-5h-6a4 4 0 0 1-4-4V5.5a4 4 0 0 1 4-4z" fill="none" stroke="#1F2D2F" stroke-width="2.2" stroke-linejoin="round"/><path d="M5.5 14.7C9 9.5 12.5 8 16 8s7 1.5 10.5 6.7C23 20 19.5 21.5 16 21.5S9 20 5.5 14.7z" fill="#1F2D2F"/><ellipse cx="16" cy="14.7" rx="4.3" ry="3.9" fill="#F0F0F3"/></svg>
<div class="abs" style="left:1263px;top:0;width:1px;height:60px;background:#DEE1E5"></div>
<svg class="abs" style="left:1281px;top:12px" width="26" height="36" viewBox="0 0 26 36" fill="none" stroke="#C5D0DA" stroke-width="2.6"><path d="M8 26v-3c0-3-6-6-6-12a11 11 0 0 1 22 0c0 6-6 9-6 12v3z" stroke-linejoin="round"/><path d="M8.5 29h9M10 33h6" stroke-width="1.8"/><path d="M7 8.5a6 6 0 0 1 4-3.5" stroke-width="1.4"/></svg>
<div class="abs" style="left:1324px;top:0;width:1px;height:60px;background:#DEE1E5"></div>
<svg class="abs" style="left:1339px;top:14px" width="34" height="34" viewBox="0 0 34 34" fill="none" stroke="#C5D0DA" stroke-width="2.6"><path d="M1.5 1.5h24.5v8.5a11 11 0 0 1 -7 21.7 11 11 0 0 1-7.5-5.5H1.5z" stroke-linejoin="round"/></svg>
<svg class="abs" style="left:1400px;top:14px" width="34" height="34" viewBox="0 0 34 34" fill="none" stroke="#C5D0DA" stroke-width="2.6"><path d="M10 24.5H1.5V1.5h24.5v6"/><circle cx="21.5" cy="20.5" r="11"/></svg>
<div class="abs" style="left:1445px;top:0;width:1px;height:60px;background:#DEE1E5"></div>
<svg class="abs" style="left:1462px;top:12px" width="30" height="36" viewBox="0 0 30 36" fill="none" stroke="#C5D0DA" stroke-width="2.4"><path d="M3.2 1v32"/><rect x="8.5" y="6" width="18.5" height="9"/><rect x="9.5" y="20" width="11.5" height="8.5" fill="#D5DDE5" stroke-width="2"/></svg>
<svg class="abs" style="left:1516px;top:10px" width="40" height="38" viewBox="0 0 40 38" fill="none" stroke="#C5D0DA" stroke-width="2.2" stroke-linejoin="round"><path d="M19.8 1v37"/><path d="M2 30h12.5V8z"/><path d="M25 30h13L25 8z"/></svg>
<div class="abs" style="left:1566px;top:0;width:1px;height:60px;background:#DEE1E5"></div>
<div class="btn abs" style="left:1583.5px;top:9.4px;width:101px;height:38.6px">Import</div>
<div class="btn abs" style="left:1693.5px;top:9.4px;width:100.5px;height:38.6px">Export</div>
<div class="btn abs" style="left:1803.5px;top:9.4px;width:101.2px;height:38.6px">Send To</div>
</div>
<div id="vp"><svg width="1575" height="751" viewBox="0 210 1575 751" style="position:absolute;left:0;top:0">
<rect x="0" y="210" width="1575" height="751" fill="#F7F7F7"/>
<defs><filter id="gblur" x="0" y="0" width="100%" height="100%"><feGaussianBlur stdDeviation="0.5"/></filter></defs><g id="gl" filter="url(#gblur)">
<path d="M6.2 210V961M15.8 210V961M25.4 210V961M35.0 210V961M44.6 210V961M54.2 210V961M73.4 210V961M83.0 210V961M92.6 210V961M102.2 210V961M111.8 210V961M121.4 210V961M131.0 210V961M140.6 210V961M150.2 210V961M169.4 210V961M179.0 210V961M188.6 210V961M198.2 210V961M207.8 210V961M217.4 210V961M227.0 210V961M236.6 210V961M246.2 210V961M265.4 210V961M275.0 210V961M284.6 210V961M294.2 210V961M303.8 210V961M313.4 210V961M323.0 210V961M332.6 210V961M342.2 210V961M361.4 210V961M371.0 210V961M380.6 210V961M390.2 210V961M399.8 210V961M409.4 210V961M419.0 210V961M428.6 210V961M438.2 210V961M457.4 210V961M467.0 210V961M476.6 210V961M486.2 210V961M495.8 210V961M505.4 210V961M515.0 210V961M524.6 210V961M534.2 210V961M553.4 210V961M563.0 210V961M572.6 210V961M582.2 210V961M591.8 210V961M601.4 210V961M611.0 210V961M620.6 210V961M630.2 210V961M649.4 210V961M659.0 210V961M668.6 210V961M678.2 210V961M687.8 210V961M697.4 210V961M707.0 210V961M716.6 210V961M726.2 210V961M745.4 210V961M755.0 210V961M764.6 210V961M774.2 210V961M783.8 210V961M793.4 210V961M803.0 210V961M812.6 210V961M822.2 210V961M841.4 210V961M851.0 210V961M860.6 210V961M870.2 210V961M879.8 210V961M889.4 210V961M899.0 210V961M908.6 210V961M918.2 210V961M937.4 210V961M947.0 210V961M956.6 210V961M966.2 210V961M975.8 210V961M985.4 210V961M995.0 210V961M1004.6 210V961M1014.2 210V961M1033.4 210V961M1043.0 210V961M1052.6 210V961M1062.2 210V961M1071.8 210V961M1081.4 210V961M1091.0 210V961M1100.6 210V961M1110.2 210V961M1129.4 210V961M1139.0 210V961M1148.6 210V961M1158.2 210V961M1167.8 210V961M1177.4 210V961M1187.0 210V961M1196.6 210V961M1206.2 210V961M1225.4 210V961M1235.0 210V961M1244.6 210V961M1254.2 210V961M1263.8 210V961M1273.4 210V961M1283.0 210V961M1292.6 210V961M1302.2 210V961M1321.4 210V961M1331.0 210V961M1340.6 210V961M1350.2 210V961M1359.8 210V961M1369.4 210V961M1379.0 210V961M1388.6 210V961M1398.2 210V961M1417.4 210V961M1427.0 210V961M1436.6 210V961M1446.2 210V961M1455.8 210V961M1465.4 210V961M1475.0 210V961M1484.6 210V961M1494.2 210V961M1513.4 210V961M1523.0 210V961M1532.6 210V961M1542.2 210V961M1551.8 210V961M1561.4 210V961M1571.0 210V961" stroke="rgba(236,180,66,0.42)" stroke-width="1.8" fill="none"/>
<path d="M0 -299.2L1575 215.8M0 -287.4L1575 227.6M0 -275.7L1575 239.3M0 -263.9L1575 251.1M0 -240.4L1575 274.6M0 -228.7L1575 286.3M0 -216.9L1575 298.1M0 -205.2L1575 309.8M0 -193.4L1575 321.6M0 -181.7L1575 333.3M0 -169.9L1575 345.1M0 -158.2L1575 356.8M0 -146.4L1575 368.6M0 -122.9L1575 392.1M0 -111.2L1575 403.8M0 -99.4L1575 415.6M0 -87.7L1575 427.3M0 -75.9L1575 439.1M0 -64.2L1575 450.8M0 -52.4L1575 462.6M0 -40.7L1575 474.3M0 -28.9L1575 486.1M0 -5.4L1575 509.6M0 6.3L1575 521.3M0 18.1L1575 533.1M0 29.8L1575 544.8M0 41.6L1575 556.6M0 53.3L1575 568.3M0 65.1L1575 580.1M0 76.8L1575 591.8M0 88.6L1575 603.6M0 112.1L1575 627.1M0 123.8L1575 638.8M0 135.6L1575 650.6M0 147.3L1575 662.3M0 159.1L1575 674.1M0 170.8L1575 685.8M0 182.6L1575 697.6M0 194.3L1575 709.3M0 206.1L1575 721.1M0 229.6L1575 744.6M0 241.3L1575 756.3M0 253.1L1575 768.1M0 264.8L1575 779.8M0 276.6L1575 791.6M0 288.3L1575 803.3M0 300.1L1575 815.1M0 311.8L1575 826.8M0 323.6L1575 838.6M0 347.1L1575 862.1M0 358.8L1575 873.8M0 370.6L1575 885.6M0 382.3L1575 897.3M0 394.1L1575 909.1M0 405.8L1575 920.8M0 417.6L1575 932.6M0 429.3L1575 944.3M0 441.1L1575 956.1M0 464.6L1575 979.6M0 476.3L1575 991.3M0 488.1L1575 1003.1M0 499.8L1575 1014.8M0 511.6L1575 1026.6M0 523.3L1575 1038.3M0 535.0L1575 1050.1M0 546.8L1575 1061.8M0 558.5L1575 1073.6M0 582.0L1575 1097.1M0 593.8L1575 1108.8M0 605.5L1575 1120.6M0 617.3L1575 1132.3M0 629.0L1575 1144.1M0 640.8L1575 1155.8M0 652.5L1575 1167.6M0 664.3L1575 1179.3M0 676.0L1575 1191.1M0 699.5L1575 1214.6M0 711.3L1575 1226.3M0 723.0L1575 1238.1M0 734.8L1575 1249.8M0 746.5L1575 1261.6M0 758.3L1575 1273.3M0 770.0L1575 1285.1M0 781.8L1575 1296.8M0 793.5L1575 1308.6M0 817.0L1575 1332.1M0 828.8L1575 1343.8M0 840.5L1575 1355.6M0 852.3L1575 1367.3M0 864.0L1575 1379.1M0 875.8L1575 1390.8M0 887.5L1575 1402.6M0 899.3L1575 1414.3M0 911.0L1575 1426.1M0 934.5L1575 1449.6M0 946.3L1575 1461.3M0 958.0L1575 1473.1" stroke="rgba(234,172,52,0.52)" stroke-width="1.8" fill="none"/>
<path d="M63.8 210V961M159.8 210V961M255.8 210V961M351.8 210V961M447.8 210V961M543.8 210V961M639.8 210V961M735.8 210V961M831.8 210V961M927.8 210V961M1023.8 210V961M1119.8 210V961M1215.8 210V961M1311.8 210V961M1407.8 210V961M1503.8 210V961" stroke="rgba(230,150,30,0.62)" stroke-width="2" fill="none"/>
<path d="M0 -252.2L1575 262.8M0 -134.7L1575 380.3M0 -17.2L1575 497.8M0 100.3L1575 615.3M0 217.8L1575 732.8M0 335.3L1575 850.3M0 452.8L1575 967.8M0 570.3L1575 1085.3M0 687.8L1575 1202.8M0 805.3L1575 1320.3M0 922.8L1575 1437.8" stroke="rgba(230,150,30,0.62)" stroke-width="2" fill="none"/>
</g>
<polygon points="0,536.5 664,246 664,268 0,558.5" fill="rgba(150,210,235,0.42)"/>
<polygon points="1427,210 1445,210 1575,240 1575,259" fill="rgba(150,210,235,0.42)"/>
</svg>
<svg width="0" height="0" style="position:absolute"><defs><g id="gridlines">
<path d="M6.2 210V961M15.8 210V961M25.4 210V961M35.0 210V961M44.6 210V961M54.2 210V961M73.4 210V961M83.0 210V961M92.6 210V961M102.2 210V961M111.8 210V961M121.4 210V961M131.0 210V961M140.6 210V961M150.2 210V961M169.4 210V961M179.0 210V961M188.6 210V961M198.2 210V961M207.8 210V961M217.4 210V961M227.0 210V961M236.6 210V961M246.2 210V961M265.4 210V961M275.0 210V961M284.6 210V961M294.2 210V961M303.8 210V961M313.4 210V961M323.0 210V961M332.6 210V961M342.2 210V961M361.4 210V961M371.0 210V961M380.6 210V961M390.2 210V961M399.8 210V961M409.4 210V961M419.0 210V961M428.6 210V961M438.2 210V961M457.4 210V961M467.0 210V961M476.6 210V961M486.2 210V961M495.8 210V961M505.4 210V961M515.0 210V961M524.6 210V961M534.2 210V961M553.4 210V961M563.0 210V961M572.6 210V961M582.2 210V961M591.8 210V961M601.4 210V961M611.0 210V961M620.6 210V961M630.2 210V961M649.4 210V961M659.0 210V961M668.6 210V961M678.2 210V961M687.8 210V961M697.4 210V961M707.0 210V961M716.6 210V961M726.2 210V961M745.4 210V961M755.0 210V961M764.6 210V961M774.2 210V961M783.8 210V961M793.4 210V961M803.0 210V961M812.6 210V961M822.2 210V961M841.4 210V961M851.0 210V961M860.6 210V961M870.2 210V961M879.8 210V961M889.4 210V961M899.0 210V961M908.6 210V961M918.2 210V961M937.4 210V961M947.0 210V961M956.6 210V961M966.2 210V961M975.8 210V961M985.4 210V961M995.0 210V961M1004.6 210V961M1014.2 210V961M1033.4 210V961M1043.0 210V961M1052.6 210V961M1062.2 210V961M1071.8 210V961M1081.4 210V961M1091.0 210V961M1100.6 210V961M1110.2 210V961M1129.4 210V961M1139.0 210V961M1148.6 210V961M1158.2 210V961M1167.8 210V961M1177.4 210V961M1187.0 210V961M1196.6 210V961M1206.2 210V961M1225.4 210V961M1235.0 210V961M1244.6 210V961M1254.2 210V961M1263.8 210V961M1273.4 210V961M1283.0 210V961M1292.6 210V961M1302.2 210V961M1321.4 210V961M1331.0 210V961M1340.6 210V961M1350.2 210V961M1359.8 210V961M1369.4 210V961M1379.0 210V961M1388.6 210V961M1398.2 210V961M1417.4 210V961M1427.0 210V961M1436.6 210V961M1446.2 210V961M1455.8 210V961M1465.4 210V961M1475.0 210V961M1484.6 210V961M1494.2 210V961M1513.4 210V961M1523.0 210V961M1532.6 210V961M1542.2 210V961M1551.8 210V961M1561.4 210V961M1571.0 210V961M0 -299.2L1575 215.8M0 -287.4L1575 227.6M0 -275.7L1575 239.3M0 -263.9L1575 251.1M0 -240.4L1575 274.6M0 -228.7L1575 286.3M0 -216.9L1575 298.1M0 -205.2L1575 309.8M0 -193.4L1575 321.6M0 -181.7L1575 333.3M0 -169.9L1575 345.1M0 -158.2L1575 356.8M0 -146.4L1575 368.6M0 -122.9L1575 392.1M0 -111.2L1575 403.8M0 -99.4L1575 415.6M0 -87.7L1575 427.3M0 -75.9L1575 439.1M0 -64.2L1575 450.8M0 -52.4L1575 462.6M0 -40.7L1575 474.3M0 -28.9L1575 486.1M0 -5.4L1575 509.6M0 6.3L1575 521.3M0 18.1L1575 533.1M0 29.8L1575 544.8M0 41.6L1575 556.6M0 53.3L1575 568.3M0 65.1L1575 580.1M0 76.8L1575 591.8M0 88.6L1575 603.6M0 112.1L1575 627.1M0 123.8L1575 638.8M0 135.6L1575 650.6M0 147.3L1575 662.3M0 159.1L1575 674.1M0 170.8L1575 685.8M0 182.6L1575 697.6M0 194.3L1575 709.3M0 206.1L1575 721.1M0 229.6L1575 744.6M0 241.3L1575 756.3M0 253.1L1575 768.1M0 264.8L1575 779.8M0 276.6L1575 791.6M0 288.3L1575 803.3M0 300.1L1575 815.1M0 311.8L1575 826.8M0 323.6L1575 838.6M0 347.1L1575 862.1M0 358.8L1575 873.8M0 370.6L1575 885.6M0 382.3L1575 897.3M0 394.1L1575 909.1M0 405.8L1575 920.8M0 417.6L1575 932.6M0 429.3L1575 944.3M0 441.1L1575 956.1M0 464.6L1575 979.6M0 476.3L1575 991.3M0 488.1L1575 1003.1M0 499.8L1575 1014.8M0 511.6L1575 1026.6M0 523.3L1575 1038.3M0 535.0L1575 1050.1M0 546.8L1575 1061.8M0 558.5L1575 1073.6M0 582.0L1575 1097.1M0 593.8L1575 1108.8M0 605.5L1575 1120.6M0 617.3L1575 1132.3M0 629.0L1575 1144.1M0 640.8L1575 1155.8M0 652.5L1575 1167.6M0 664.3L1575 1179.3M0 676.0L1575 1191.1M0 699.5L1575 1214.6M0 711.3L1575 1226.3M0 723.0L1575 1238.1M0 734.8L1575 1249.8M0 746.5L1575 1261.6M0 758.3L1575 1273.3M0 770.0L1575 1285.1M0 781.8L1575 1296.8M0 793.5L1575 1308.6M0 817.0L1575 1332.1M0 828.8L1575 1343.8M0 840.5L1575 1355.6M0 852.3L1575 1367.3M0 864.0L1575 1379.1M0 875.8L1575 1390.8M0 887.5L1575 1402.6M0 899.3L1575 1414.3M0 911.0L1575 1426.1M0 934.5L1575 1449.6M0 946.3L1575 1461.3M0 958.0L1575 1473.1" stroke="rgba(140,40,0,0.13)" stroke-width="1.6" fill="none"/>
<path d="M63.8 210V961M159.8 210V961M255.8 210V961M351.8 210V961M447.8 210V961M543.8 210V961M639.8 210V961M735.8 210V961M831.8 210V961M927.8 210V961M1023.8 210V961M1119.8 210V961M1215.8 210V961M1311.8 210V961M1407.8 210V961M1503.8 210V961M0 -252.2L1575 262.8M0 -134.7L1575 380.3M0 -17.2L1575 497.8M0 100.3L1575 615.3M0 217.8L1575 732.8M0 335.3L1575 850.3M0 452.8L1575 967.8M0 570.3L1575 1085.3M0 687.8L1575 1202.8M0 805.3L1575 1320.3M0 922.8L1575 1437.8" stroke="rgba(140,40,0,0.2)" stroke-width="1.7" fill="none"/>
</g></defs></svg><svg class="abs" style="left:0;top:0" width="1575" height="751" viewBox="0 210 1575 751"><defs><filter id="blur6" x="-20%" y="-20%" width="140%" height="140%"><feGaussianBlur stdDeviation="5"/></filter><clipPath id="boxclip"><polygon points="664,205 857.5,205 1024,205 1024,511 857.5,585.5 664,523"/></clipPath></defs><polygon points="672,782 868,722 1028,781 877,845" fill="rgba(85,105,125,0.55)" filter="url(#blur6)"/><polygon points="842.6,682.4 846.4,691.6 849.4,701.0 851.8,710.5 853.4,720.0 854.2,729.3 854.2,738.5 853.4,747.4 851.8,755.8 849.5,763.8 846.4,771.1 842.6,777.8 838.2,783.7 833.2,788.9 827.5,793.1 821.4,796.5 814.9,798.9 808.0,800.3 800.8,800.8 793.4,800.2 785.9,798.7 778.3,796.2 770.8,792.7 763.4,788.4 756.2,783.2 749.3,777.2 742.7,770.4 736.6,763.0 731.0,755.0 725.9,746.5 721.4,737.6 717.6,728.4 714.6,719.0 712.2,709.5 710.6,700.0 709.8,690.7 709.8,681.5 710.6,672.6 712.2,664.2 714.5,656.2 717.6,648.9 721.4,642.2 725.8,636.3 730.8,631.1 736.5,626.9 742.6,623.5 749.1,621.1 756.0,619.7 763.2,619.2 770.6,619.8 778.1,621.3 785.7,623.8 793.2,627.3 800.6,631.6 807.8,636.8 814.7,642.8 821.3,649.6 827.4,657.0 833.0,665.0 838.1,673.5" fill="#C0141F" stroke="#46566A" stroke-width="1.2"/><polygon points="841.7,680.9 848.9,702.5 864.9,703.5 857.7,681.9" fill="#A8121C" stroke="#46566A" stroke-width="1.1" stroke-linejoin="round"/><polygon points="832.3,705.8 848.9,702.5 864.9,703.5 848.3,706.8" fill="#C5141E" stroke="#46566A" stroke-width="1.1" stroke-linejoin="round"/><polygon points="825.3,684.8 841.7,680.9 857.7,681.9 841.3,685.8" fill="#D8182A" stroke="#46566A" stroke-width="1.1" stroke-linejoin="round"/><polygon points="852.5,721.2 853.5,742.6 869.5,743.6 868.5,722.2" fill="#A8121C" stroke="#46566A" stroke-width="1.1" stroke-linejoin="round"/><polygon points="835.3,737.5 853.5,742.6 869.5,743.6 851.3,738.5" fill="#C5141E" stroke="#46566A" stroke-width="1.1" stroke-linejoin="round"/><polygon points="834.4,716.7 852.5,721.2 868.5,722.2 850.4,717.7" fill="#D8182A" stroke="#46566A" stroke-width="1.1" stroke-linejoin="round"/><polygon points="851.6,759.8 846.2,778.2 862.2,779.2 867.6,760.8" fill="#A8121C" stroke="#46566A" stroke-width="1.1" stroke-linejoin="round"/><polygon points="829.0,765.4 846.2,778.2 862.2,779.2 845.0,766.4" fill="#C5141E" stroke="#46566A" stroke-width="1.1" stroke-linejoin="round"/><polygon points="834.2,747.6 851.6,759.8 867.6,760.8 850.2,748.6" fill="#D8182A" stroke="#46566A" stroke-width="1.1" stroke-linejoin="round"/><polygon points="839.1,791.6 828.1,804.4 844.1,805.4 855.1,792.6" fill="#A8121C" stroke="#46566A" stroke-width="1.1" stroke-linejoin="round"/><polygon points="814.2,785.7 828.1,804.4 844.1,805.4 830.2,786.7" fill="#C5141E" stroke="#46566A" stroke-width="1.1" stroke-linejoin="round"/><polygon points="824.9,773.3 839.1,791.6 855.1,792.6 840.9,774.3" fill="#D8182A" stroke="#46566A" stroke-width="1.1" stroke-linejoin="round"/><polygon points="816.8,812.3 801.7,817.7 817.7,818.7 832.8,813.3" fill="#A8121C" stroke="#46566A" stroke-width="1.1" stroke-linejoin="round"/><polygon points="792.9,795.6 801.7,817.7 817.7,818.7 808.9,796.6" fill="#C5141E" stroke="#46566A" stroke-width="1.1" stroke-linejoin="round"/><polygon points="807.6,790.3 816.8,812.3 832.8,813.3 823.6,791.3" fill="#D8182A" stroke="#46566A" stroke-width="1.1" stroke-linejoin="round"/><polygon points="787.6,819.0 770.4,816.4 786.4,817.4 803.6,820.0" fill="#A8121C" stroke="#46566A" stroke-width="1.1" stroke-linejoin="round"/><polygon points="767.9,793.8 770.4,816.4 786.4,817.4 783.9,794.8" fill="#C5141E" stroke="#46566A" stroke-width="1.1" stroke-linejoin="round"/><polygon points="784.6,796.3 787.6,819.0 803.6,820.0 800.6,797.3" fill="#D8182A" stroke="#46566A" stroke-width="1.1" stroke-linejoin="round"/><polygon points="755.5,810.8 738.5,800.5 754.5,801.5 771.5,811.8" fill="#A8121C" stroke="#46566A" stroke-width="1.1" stroke-linejoin="round"/><polygon points="742.7,780.6 738.5,800.5 754.5,801.5 758.7,781.6" fill="#C5141E" stroke="#46566A" stroke-width="1.1" stroke-linejoin="round"/><polygon points="759.2,790.5 755.5,810.8 771.5,811.8 775.2,791.5" fill="#D8182A" stroke="#46566A" stroke-width="1.1" stroke-linejoin="round"/><polygon points="724.8,788.9 710.3,772.3 726.3,773.3 740.8,789.9" fill="#A8121C" stroke="#46566A" stroke-width="1.1" stroke-linejoin="round"/><polygon points="720.6,757.7 710.3,772.3 726.3,773.3 736.6,758.7" fill="#C5141E" stroke="#46566A" stroke-width="1.1" stroke-linejoin="round"/><polygon points="734.7,773.7 724.8,788.9 740.8,789.9 750.7,774.7" fill="#D8182A" stroke="#46566A" stroke-width="1.1" stroke-linejoin="round"/><polygon points="699.7,756.2 689.7,735.6 705.7,736.6 715.7,757.2" fill="#A8121C" stroke="#46566A" stroke-width="1.1" stroke-linejoin="round"/><polygon points="704.7,728.2 689.7,735.6 705.7,736.6 720.7,729.2" fill="#C5141E" stroke="#46566A" stroke-width="1.1" stroke-linejoin="round"/><polygon points="714.4,748.2 699.7,756.2 715.7,757.2 730.4,749.2" fill="#D8182A" stroke="#46566A" stroke-width="1.1" stroke-linejoin="round"/><polygon points="683.5,717.1 679.3,695.2 695.3,696.2 699.5,718.1" fill="#A8121C" stroke="#46566A" stroke-width="1.1" stroke-linejoin="round"/><polygon points="697.0,696.1 679.3,695.2 695.3,696.2 713.0,697.1" fill="#C5141E" stroke="#46566A" stroke-width="1.1" stroke-linejoin="round"/><polygon points="701.1,717.4 683.5,717.1 699.5,718.1 717.1,718.4" fill="#D8182A" stroke="#46566A" stroke-width="1.1" stroke-linejoin="round"/><polygon points="678.5,676.9 680.7,656.7 696.7,657.7 694.5,677.9" fill="#A8121C" stroke="#46566A" stroke-width="1.1" stroke-linejoin="round"/><polygon points="698.7,665.8 680.7,656.7 696.7,657.7 714.7,666.8" fill="#C5141E" stroke="#46566A" stroke-width="1.1" stroke-linejoin="round"/><polygon points="696.5,685.4 678.5,676.9 694.5,677.9 712.5,686.4" fill="#D8182A" stroke="#46566A" stroke-width="1.1" stroke-linejoin="round"/><polygon points="685.3,641.1 693.6,625.3 709.6,626.3 701.3,642.1" fill="#A8121C" stroke="#46566A" stroke-width="1.1" stroke-linejoin="round"/><polygon points="709.4,641.3 693.6,625.3 709.6,626.3 725.4,642.3" fill="#C5141E" stroke="#46566A" stroke-width="1.1" stroke-linejoin="round"/><polygon points="701.3,656.6 685.3,641.1 701.3,642.1 717.3,657.6" fill="#D8182A" stroke="#46566A" stroke-width="1.1" stroke-linejoin="round"/><polygon points="703.0,614.4 716.2,605.2 732.2,606.2 719.0,615.4" fill="#A8121C" stroke="#46566A" stroke-width="1.1" stroke-linejoin="round"/><polygon points="727.8,626.0 716.2,605.2 732.2,606.2 743.8,627.0" fill="#C5141E" stroke="#46566A" stroke-width="1.1" stroke-linejoin="round"/><polygon points="714.9,634.9 703.0,614.4 719.0,615.4 730.9,635.9" fill="#D8182A" stroke="#46566A" stroke-width="1.1" stroke-linejoin="round"/><polygon points="729.2,600.5 745.6,599.1 761.6,600.1 745.2,601.5" fill="#A8121C" stroke="#46566A" stroke-width="1.1" stroke-linejoin="round"/><polygon points="751.3,621.8 745.6,599.1 761.6,600.1 767.3,622.8" fill="#C5141E" stroke="#46566A" stroke-width="1.1" stroke-linejoin="round"/><polygon points="735.4,623.2 729.2,600.5 745.2,601.5 751.4,624.2" fill="#D8182A" stroke="#46566A" stroke-width="1.1" stroke-linejoin="round"/><polygon points="760.3,601.3 777.8,607.8 793.8,608.8 776.3,602.3" fill="#A8121C" stroke="#46566A" stroke-width="1.1" stroke-linejoin="round"/><polygon points="776.9,629.5 777.8,607.8 793.8,608.8 792.9,630.5" fill="#C5141E" stroke="#46566A" stroke-width="1.1" stroke-linejoin="round"/><polygon points="760.0,623.1 760.3,601.3 776.3,602.3 776.0,624.1" fill="#D8182A" stroke="#46566A" stroke-width="1.1" stroke-linejoin="round"/><polygon points="792.3,616.6 808.3,630.2 824.3,631.2 808.3,617.6" fill="#A8121C" stroke="#46566A" stroke-width="1.1" stroke-linejoin="round"/><polygon points="800.9,647.8 808.3,630.2 824.3,631.2 816.9,648.8" fill="#C5141E" stroke="#46566A" stroke-width="1.1" stroke-linejoin="round"/><polygon points="785.4,634.6 792.3,616.6 808.3,617.6 801.4,635.6" fill="#D8182A" stroke="#46566A" stroke-width="1.1" stroke-linejoin="round"/><polygon points="820.7,644.3 833.1,663.3 849.1,664.3 836.7,645.3" fill="#A8121C" stroke="#46566A" stroke-width="1.1" stroke-linejoin="round"/><polygon points="820.3,674.5 833.1,663.3 849.1,664.3 836.3,675.5" fill="#C5141E" stroke="#46566A" stroke-width="1.1" stroke-linejoin="round"/><polygon points="808.2,656.1 820.7,644.3 836.7,645.3 824.2,657.1" fill="#D8182A" stroke="#46566A" stroke-width="1.1" stroke-linejoin="round"/><polygon points="826.6,681.4 830.4,690.6 833.4,700.0 835.8,709.5 837.4,719.0 838.2,728.3 838.2,737.5 837.4,746.4 835.8,754.8 833.5,762.8 830.4,770.1 826.6,776.8 822.2,782.7 817.2,787.9 811.5,792.1 805.4,795.5 798.9,797.9 792.0,799.3 784.8,799.8 777.4,799.2 769.9,797.7 762.3,795.2 754.8,791.7 747.4,787.4 740.2,782.2 733.3,776.2 726.7,769.4 720.6,762.0 715.0,754.0 709.9,745.5 705.4,736.6 701.6,727.4 698.6,718.0 696.2,708.5 694.6,699.0 693.8,689.7 693.8,680.5 694.6,671.6 696.2,663.2 698.5,655.2 701.6,647.9 705.4,641.2 709.8,635.3 714.8,630.1 720.5,625.9 726.6,622.5 733.1,620.1 740.0,618.7 747.2,618.2 754.6,618.8 762.1,620.3 769.7,622.8 777.2,626.3 784.6,630.6 791.8,635.8 798.7,641.8 805.3,648.6 811.4,656.0 817.0,664.0 822.1,672.5" fill="#DC1C28"/><polygon points="825.3,684.8 832.3,705.8 848.9,702.5 841.7,680.9" fill="#E41E2B" stroke="#46566A" stroke-width="1.1" stroke-linejoin="round"/><polygon points="834.4,716.7 835.3,737.5 853.5,742.6 852.5,721.2" fill="#E41E2B" stroke="#46566A" stroke-width="1.1" stroke-linejoin="round"/><polygon points="834.2,747.6 829.0,765.4 846.2,778.2 851.6,759.8" fill="#E41E2B" stroke="#46566A" stroke-width="1.1" stroke-linejoin="round"/><polygon points="824.9,773.3 814.2,785.7 828.1,804.4 839.1,791.6" fill="#E41E2B" stroke="#46566A" stroke-width="1.1" stroke-linejoin="round"/><polygon points="807.6,790.3 792.9,795.6 801.7,817.7 816.8,812.3" fill="#E41E2B" stroke="#46566A" stroke-width="1.1" stroke-linejoin="round"/><polygon points="784.6,796.3 767.9,793.8 770.4,816.4 787.6,819.0" fill="#E41E2B" stroke="#46566A" stroke-width="1.1" stroke-linejoin="round"/><polygon points="759.2,790.5 742.7,780.6 738.5,800.5 755.5,810.8" fill="#E41E2B" stroke="#46566A" stroke-width="1.1" stroke-linejoin="round"/><polygon points="734.7,773.7 720.6,757.7 710.3,772.3 724.8,788.9" fill="#E41E2B" stroke="#46566A" stroke-width="1.1" stroke-linejoin="round"/><polygon points="714.4,748.2 704.7,728.2 689.7,735.6 699.7,756.2" fill="#E41E2B" stroke="#46566A" stroke-width="1.1" stroke-linejoin="round"/><polygon points="701.1,717.4 697.0,696.1 679.3,695.2 683.5,717.1" fill="#E41E2B" stroke="#46566A" stroke-width="1.1" stroke-linejoin="round"/><polygon points="696.5,685.4 698.7,665.8 680.7,656.7 678.5,676.9" fill="#E41E2B" stroke="#46566A" stroke-width="1.1" stroke-linejoin="round"/><polygon points="701.3,656.6 709.4,641.3 693.6,625.3 685.3,641.1" fill="#E41E2B" stroke="#46566A" stroke-width="1.1" stroke-linejoin="round"/><polygon points="714.9,634.9 727.8,626.0 716.2,605.2 703.0,614.4" fill="#E41E2B" stroke="#46566A" stroke-width="1.1" stroke-linejoin="round"/><polygon points="735.4,623.2 751.3,621.8 745.6,599.1 729.2,600.5" fill="#E41E2B" stroke="#46566A" stroke-width="1.1" stroke-linejoin="round"/><polygon points="760.0,623.1 776.9,629.5 777.8,607.8 760.3,601.3" fill="#E41E2B" stroke="#46566A" stroke-width="1.1" stroke-linejoin="round"/><polygon points="785.4,634.6 800.9,647.8 808.3,630.2 792.3,616.6" fill="#E41E2B" stroke="#46566A" stroke-width="1.1" stroke-linejoin="round"/><polygon points="808.2,656.1 820.3,674.5 833.1,663.3 820.7,644.3" fill="#E41E2B" stroke="#46566A" stroke-width="1.1" stroke-linejoin="round"/><polygon points="722,606 752,588 795,598 828,614 836,632 800,652 742,642 712,624" fill="#DF1C28"/><polygon points="817.1,680.1 821.0,689.4 824.1,698.9 826.5,708.5 828.1,718.1 828.9,727.5 828.9,736.8 828.1,745.7 826.5,754.3 824.1,762.3 821.0,769.7 817.2,776.4 812.7,782.4 807.6,787.6 802.0,791.9 795.8,795.3 789.2,797.8 782.2,799.2 775.0,799.7 767.5,799.1 759.9,797.6 752.3,795.0 744.7,791.5 737.2,787.1 729.9,781.9 722.9,775.8 716.3,769.0 710.1,761.5 704.5,753.4 699.3,744.8 694.9,735.9 691.0,726.6 687.9,717.1 685.5,707.5 683.9,697.9 683.1,688.5 683.1,679.2 683.9,670.3 685.5,661.7 687.9,653.7 691.0,646.3 694.8,639.6 699.3,633.6 704.4,628.4 710.0,624.1 716.2,620.7 722.8,618.2 729.8,616.8 737.0,616.3 744.5,616.9 752.1,618.4 759.7,621.0 767.3,624.5 774.8,628.9 782.1,634.1 789.1,640.2 795.7,647.0 801.9,654.5 807.5,662.6 812.7,671.2" fill="#DE1D29"/><clipPath id="faceclip"><polygon points="814.2,681.5 817.0,688.1 819.4,694.8 821.5,701.6 823.1,708.5 824.3,715.3 825.1,722.1 825.5,728.8 825.4,735.4 824.9,741.8 824.0,748.0 822.6,754.0 820.9,759.7 818.7,765.0 816.2,770.1 813.3,774.7 810.0,778.9 806.5,782.7 802.5,786.0 798.4,788.8 793.9,791.2 789.2,793.0 784.3,794.3 779.3,795.1 774.1,795.3 768.7,795.0 763.3,794.2 757.9,792.8 752.4,790.9 747.0,788.5 741.6,785.6 736.3,782.2 731.2,778.4 726.1,774.1 721.3,769.4 716.7,764.3 712.3,758.9 708.2,753.2 704.4,747.2 700.9,741.0 697.8,734.5 695.0,727.9 692.6,721.2 690.5,714.4 688.9,707.5 687.7,700.7 686.9,693.9 686.5,687.2 686.6,680.6 687.1,674.2 688.0,668.0 689.4,662.0 691.1,656.3 693.3,651.0 695.8,645.9 698.7,641.3 702.0,637.1 705.5,633.3 709.5,630.0 713.6,627.2 718.1,624.8 722.8,623.0 727.7,621.7 732.7,620.9 737.9,620.7 743.3,621.0 748.7,621.8 754.1,623.2 759.6,625.1 765.0,627.5 770.4,630.4 775.7,633.8 780.8,637.6 785.9,641.9 790.7,646.6 795.3,651.7 799.7,657.1 803.8,662.8 807.6,668.8 811.1,675.0"/></clipPath><polygon points="814.2,681.5 817.0,688.1 819.4,694.8 821.5,701.6 823.1,708.5 824.3,715.3 825.1,722.1 825.5,728.8 825.4,735.4 824.9,741.8 824.0,748.0 822.6,754.0 820.9,759.7 818.7,765.0 816.2,770.1 813.3,774.7 810.0,778.9 806.5,782.7 802.5,786.0 798.4,788.8 793.9,791.2 789.2,793.0 784.3,794.3 779.3,795.1 774.1,795.3 768.7,795.0 763.3,794.2 757.9,792.8 752.4,790.9 747.0,788.5 741.6,785.6 736.3,782.2 731.2,778.4 726.1,774.1 721.3,769.4 716.7,764.3 712.3,758.9 708.2,753.2 704.4,747.2 700.9,741.0 697.8,734.5 695.0,727.9 692.6,721.2 690.5,714.4 688.9,707.5 687.7,700.7 686.9,693.9 686.5,687.2 686.6,680.6 687.1,674.2 688.0,668.0 689.4,662.0 691.1,656.3 693.3,651.0 695.8,645.9 698.7,641.3 702.0,637.1 705.5,633.3 709.5,630.0 713.6,627.2 718.1,624.8 722.8,623.0 727.7,621.7 732.7,620.9 737.9,620.7 743.3,621.0 748.7,621.8 754.1,623.2 759.6,625.1 765.0,627.5 770.4,630.4 775.7,633.8 780.8,637.6 785.9,641.9 790.7,646.6 795.3,651.7 799.7,657.1 803.8,662.8 807.6,668.8 811.1,675.0" fill="#C63646"/><g clip-path="url(#faceclip)"><use href="#gridlines"/></g><polygon points="814.2,681.5 817.0,688.1 819.4,694.8 821.5,701.6 823.1,708.5 824.3,715.3 825.1,722.1 825.5,728.8 825.4,735.4 824.9,741.8 824.0,748.0 822.6,754.0 820.9,759.7 818.7,765.0 816.2,770.1 813.3,774.7 810.0,778.9 806.5,782.7 802.5,786.0 798.4,788.8 793.9,791.2 789.2,793.0 784.3,794.3 779.3,795.1 774.1,795.3 768.7,795.0 763.3,794.2 757.9,792.8 752.4,790.9 747.0,788.5 741.6,785.6 736.3,782.2 731.2,778.4 726.1,774.1 721.3,769.4 716.7,764.3 712.3,758.9 708.2,753.2 704.4,747.2 700.9,741.0 697.8,734.5 695.0,727.9 692.6,721.2 690.5,714.4 688.9,707.5 687.7,700.7 686.9,693.9 686.5,687.2 686.6,680.6 687.1,674.2 688.0,668.0 689.4,662.0 691.1,656.3 693.3,651.0 695.8,645.9 698.7,641.3 702.0,637.1 705.5,633.3 709.5,630.0 713.6,627.2 718.1,624.8 722.8,623.0 727.7,621.7 732.7,620.9 737.9,620.7 743.3,621.0 748.7,621.8 754.1,623.2 759.6,625.1 765.0,627.5 770.4,630.4 775.7,633.8 780.8,637.6 785.9,641.9 790.7,646.6 795.3,651.7 799.7,657.1 803.8,662.8 807.6,668.8 811.1,675.0" fill="none" stroke="#46566A" stroke-width="1.6"/><polygon points="972.0,536.0 960.0,480.0 730.0,480.0 716.0,540.0 746.5,541.9 727.0,550.5 721.8,561.3 735.8,560.7 720.2,576.8 723.0,587.9 741.6,580.0 732.2,602.5 742.6,612.1 763.0,596.7 761.3,623.7 777.6,630.4 796.7,608.5 802.9,637.2 822.7,640.0 837.6,613.4 850.8,640.9 871.1,639.4 879.5,610.7 897.7,634.3 915.3,628.6 916.0,600.9 936.4,618.4 948.7,609.4 941.5,585.4 961.0,595.5 966.2,584.7 952.2,566.6 967.8,569.2 965.0,558.1 946.4,547.3" fill="#E21B27" stroke="#46566A" stroke-width="1.3" stroke-linejoin="round"/><polyline points="930.6,580.0 924.9,583.5 918.3,586.8 910.9,589.7 902.8,592.4 894.0,594.6 884.7,596.5 874.9,598.0 864.8,599.1 854.5,599.8 844.0,600.0 833.5,599.8 823.2,599.1 813.1,598.0 803.3,596.5 794.0,594.6 785.2,592.4 777.1,589.7 769.7,586.8 763.1,583.5 757.4,580.0" fill="none" stroke="#46566A" stroke-width="1.2"/><polygon points="751.3,543.0 727.0,542.5 727.0,550.5 751.3,547.8" fill="#B8141D" stroke="#46566A" stroke-width="1.3" stroke-linejoin="round"/><polygon points="721.8,553.3 727.0,542.5 727.0,550.5 721.8,561.3" fill="#A8121B" stroke="#46566A" stroke-width="1.3" stroke-linejoin="round"/><polygon points="744.8,553.0 751.3,543.0 727.0,542.5 721.8,553.3" fill="#E01C28" stroke="#46566A" stroke-width="1.3" stroke-linejoin="round"/><polygon points="940.4,547.4 965.0,550.1 965.0,558.1 940.4,552.2" fill="#A51019" stroke="#46566A" stroke-width="1.3" stroke-linejoin="round"/><polygon points="965.0,550.1 967.8,561.2 967.8,569.2 965.0,558.1" fill="#A8121B" stroke="#46566A" stroke-width="1.3" stroke-linejoin="round"/><polygon points="940.4,547.4 944.0,557.7 967.8,561.2 965.0,550.1" fill="#C8151F" stroke="#46566A" stroke-width="1.3" stroke-linejoin="round"/><polygon points="744.0,558.3 720.2,568.8 720.2,576.8 744.0,563.1" fill="#B8141D" stroke="#46566A" stroke-width="1.3" stroke-linejoin="round"/><polygon points="723.0,579.9 720.2,568.8 720.2,576.8 723.0,587.9" fill="#A8121B" stroke="#46566A" stroke-width="1.3" stroke-linejoin="round"/><polygon points="747.6,568.6 744.0,558.3 720.2,568.8 723.0,579.9" fill="#E01C28" stroke="#46566A" stroke-width="1.3" stroke-linejoin="round"/><polygon points="943.2,563.0 966.2,576.7 966.2,584.7 943.2,567.8" fill="#A51019" stroke="#46566A" stroke-width="1.3" stroke-linejoin="round"/><polygon points="966.2,576.7 961.0,587.5 961.0,595.5 966.2,584.7" fill="#A8121B" stroke="#46566A" stroke-width="1.3" stroke-linejoin="round"/><polygon points="943.2,563.0 936.7,573.0 961.0,587.5 966.2,576.7" fill="#C8151F" stroke="#46566A" stroke-width="1.3" stroke-linejoin="round"/><polygon points="751.9,573.6 732.2,594.5 732.2,602.5 751.9,578.4" fill="#B8141D" stroke="#46566A" stroke-width="1.3" stroke-linejoin="round"/><polygon points="742.6,604.1 732.2,594.5 732.2,602.5 742.6,612.1" fill="#A8121B" stroke="#46566A" stroke-width="1.3" stroke-linejoin="round"/><polygon points="765.0,582.5 751.9,573.6 732.2,594.5 742.6,604.1" fill="#E01C28" stroke="#46566A" stroke-width="1.3" stroke-linejoin="round"/><polygon points="930.9,577.8 948.7,601.4 948.7,609.4 930.9,582.6" fill="#A51019" stroke="#46566A" stroke-width="1.3" stroke-linejoin="round"/><polygon points="948.7,601.4 936.4,610.4 936.4,618.4 948.7,609.4" fill="#A8121B" stroke="#46566A" stroke-width="1.3" stroke-linejoin="round"/><polygon points="930.9,577.8 915.3,586.1 936.4,610.4 948.7,601.4" fill="#C8151F" stroke="#46566A" stroke-width="1.3" stroke-linejoin="round"/><polygon points="773.9,586.5 761.3,615.7 761.3,623.7 773.9,591.3" fill="#B8141D" stroke="#46566A" stroke-width="1.3" stroke-linejoin="round"/><polygon points="777.6,622.4 761.3,615.7 761.3,623.7 777.6,630.4" fill="#A8121B" stroke="#46566A" stroke-width="1.3" stroke-linejoin="round"/><polygon points="794.5,592.8 773.9,586.5 761.3,615.7 777.6,622.4" fill="#E01C28" stroke="#46566A" stroke-width="1.3" stroke-linejoin="round"/><polygon points="905.3,589.6 915.3,620.6 915.3,628.6 905.3,594.4" fill="#A51019" stroke="#46566A" stroke-width="1.3" stroke-linejoin="round"/><polygon points="915.3,620.6 897.7,626.3 897.7,634.3 915.3,628.6" fill="#A8121B" stroke="#46566A" stroke-width="1.3" stroke-linejoin="round"/><polygon points="905.3,589.6 883.0,594.8 897.7,626.3 915.3,620.6" fill="#C8151F" stroke="#46566A" stroke-width="1.3" stroke-linejoin="round"/><polygon points="806.5,595.1 802.9,629.2 802.9,637.2 806.5,599.9" fill="#B8141D" stroke="#46566A" stroke-width="1.3" stroke-linejoin="round"/><polygon points="822.7,632.0 802.9,629.2 802.9,637.2 822.7,640.0" fill="#A8121B" stroke="#46566A" stroke-width="1.3" stroke-linejoin="round"/><polygon points="831.5,597.7 806.5,595.1 802.9,629.2 822.7,632.0" fill="#E01C28" stroke="#46566A" stroke-width="1.3" stroke-linejoin="round"/><polygon points="871.1,631.4 850.8,632.9 850.8,640.9 871.1,639.4" fill="#A8121B" stroke="#46566A" stroke-width="1.3" stroke-linejoin="round"/><polygon points="870.4,596.6 844.8,598.0 850.8,632.9 871.1,631.4" fill="#B8141D" stroke="#46566A" stroke-width="1.3" stroke-linejoin="round"/><polygon points="834,626 846,623 856,636 842,643" fill="#E4E4E8" stroke="#46566A" stroke-width="1.1"/><polygon points="664,205 857.5,205 857.5,585.5 664,523" fill="#BA2230"/><defs><linearGradient id="rf" x1="857.5" x2="1024" y1="0" y2="0" gradientUnits="userSpaceOnUse"><stop offset="0" stop-color="#C81C24"/><stop offset="0.3" stop-color="#C5171F"/><stop offset="1" stop-color="#C0161E"/></linearGradient></defs><polygon points="857.5,205 1024,205 1024,511 857.5,585.5" fill="url(#rf)"/><g clip-path="url(#boxclip)"><use href="#gridlines" opacity="1"/></g><polyline points="664,205 664,523 857.5,585.5 1024,511 1024,205" fill="none" stroke="#46566A" stroke-width="1.6"/><path d="M857.5 216V585.5M840 210L857.5 216 871 210M908 210V217L924 210" fill="none" stroke="#46566A" stroke-width="1.4"/><polygon points="842,210 857.5,215 870,210" fill="#E8202A"/></svg><svg class="abs" style="left:0;top:0" width="200" height="420" viewBox="0 210 200 420">
<polygon points="29.4,257.2 74.4,246.7 127.2,256.1 83.3,270.6" fill="rgba(255,255,255,0.72)" stroke="#A9A9A9" stroke-width="1"/>
<polygon points="29.4,257.2 83.3,270.6 83.3,347.8 34.4,322.2" fill="rgba(246,246,248,0.74)" stroke="#A9A9A9" stroke-width="1"/>
<polygon points="83.3,270.6 127.2,256.1 123.3,320 83.3,347.8" fill="rgba(238,238,240,0.74)" stroke="#A9A9A9" stroke-width="1"/>
<polygon points="34.4,322.2 83.3,347.8 123.3,320 123,325 83.3,352 36,327" fill="rgba(150,150,155,0.6)"/>
<text transform="translate(39,297.5) rotate(21) scale(0.82,1.2)" font-family="Liberation Sans" font-weight="bold" font-size="13" fill="#8E9399">FRONT</text>
<text transform="translate(96.5,311.5) rotate(-39) scale(0.82,1.2)" font-family="Liberation Sans" font-weight="bold" font-size="12" fill="#8E9399">RIGHT</text>
<path d="M68.5 254.5l3-1.5 2 1 3 -0.5 3 1.5" fill="none" stroke="#9A9A9A" stroke-width="1.2"/>
<g fill="rgba(255,255,255,0.25)" stroke="#666A70" stroke-width="1">
<circle cx="43.8" cy="391.2" r="20.5"/><circle cx="43.8" cy="443.6" r="20.5"/><circle cx="43.8" cy="496.3" r="20.5"/><circle cx="43.8" cy="549" r="20.5"/><circle cx="43.8" cy="601.2" r="20.5"/>
</g>
<g fill="none" stroke="#9A9A9A" stroke-width="1.4">
<path d="M35.5 391.5L43.8 383.5 52 391.5M37.8 389.5V399.5H41.5V394H46V399.5H49.8V389.5"/>
<path d="M35.5 439.5V435.5H39.5M48 435.5H52V439.5M52 448V452H48M39.5 452H35.5V448"/>
</g>
<path d="M43.8 488.5V504M36 496.3H51.5" stroke="#9E9E9E" stroke-width="2.4"/>
<path d="M35 549H52.5" stroke="#9E9E9E" stroke-width="2.4"/>
<g fill="none" stroke="#9A9A9A" stroke-width="1.2"><path d="M37 610.5H51.5"/><path d="M38 608V596.5l3-2h9l-2.5 2.5H38M47.5 597V608H38M50 594.5V605.5L47.5 608"/></g>
</svg>
<div class="abs" style="left:1451px;top:670.8px;width:111px;height:25.7px;border:1px solid rgba(210,215,222,0.8);border-radius:4px;background:rgba(255,255,255,0.72);color:#6A7A8A;font-size:14.2px;text-align:center;line-height:23px">Edit Grid</div>
<div class="abs" style="left:1397px;top:713px;color:#3D4D60;font-size:14.2px;line-height:20px;white-space:nowrap">Snap Grid</div>
<div class="abs" style="left:1473.5px;top:710.5px;width:88.5px;height:26px;border:1px solid rgba(210,215,222,0.8);border-radius:3px;background:rgba(255,255,255,0.72);color:#5A6672;font-size:14.2px;line-height:24px;padding-left:10px;white-space:nowrap">0.1 mm</div>
<svg class="abs" style="left:1540px;top:719px" width="11" height="7" viewBox="0 0 11 7"><path d="M0.5 6.5L5.5 1l5 5.5z" fill="#333"/></svg>
</div><div id="rp">
<svg class="abs" style="left:0;top:0" width="345" height="751" viewBox="1575 210 345 751">
<defs>
<radialGradient id="halo"><stop offset="0" stop-color="#000" stop-opacity="0.10"/><stop offset="0.6" stop-color="#000" stop-opacity="0.05"/><stop offset="1" stop-color="#000" stop-opacity="0"/></radialGradient>
<linearGradient id="hs" x1="0" x2="1"><stop offset="0" stop-color="#B00A6E"/><stop offset="0.7" stop-color="#E0108F"/><stop offset="1" stop-color="#D00D85"/></linearGradient>
<linearGradient id="pb" x1="0" x2="1"><stop offset="0" stop-color="#8E9296"/><stop offset="0.45" stop-color="#D2D6DA"/><stop offset="1" stop-color="#C9CDD1"/></linearGradient>
<linearGradient id="tu" x1="0" x2="1"><stop offset="0" stop-color="#B85A14"/><stop offset="0.5" stop-color="#D06C1C"/><stop offset="1" stop-color="#D8781F"/></linearGradient>
</defs>
<!-- workplane icon -->
<g fill="none" stroke="#1A95C8" stroke-width="2.2"><path d="M1612,229.5 L1652,227 L1651.5,270 L1613,267z"/></g>
<g fill="none" stroke="#1A95C8" stroke-width="1.1"><path d="M1620,229 L1621,267.5 M1628,228.5 L1628.7,268 M1636,228 L1636.5,268.5 M1644,227.5 L1644,269.5 M1612.3,237 L1651.8,235 M1612.5,245 L1651.8,243.5 M1612.7,253 L1651.7,252 M1612.9,261 L1651.6,260.5"/></g>
<!-- ruler icon -->
<g fill="none" stroke="#1A95C8" stroke-width="2.2" stroke-linejoin="round"><path d="M1726.5,230.5 L1735,230 L1737,258 L1769,259.5 L1769.5,271 L1728.5,267.5z"/></g>
<g fill="none" stroke="#1A95C8" stroke-width="1.2"><path d="M1729,238H1733M1729.5,244.5H1733.5M1730,251H1734M1744,258.5V263M1751,259V263.5M1758,259.3V264M1765,259.5V264"/></g>
<!-- notes icon -->
<path d="M1848,228.5 H1876 a3.5,3.5 0 0 1 3.5,3.5 V262 a3.5,3.5 0 0 1 -3.5,3.5 H1866 L1861,271.5 L1856,265.5 H1848.5 a3.5,3.5 0 0 1 -3.5,-3.5 V232 a3.5,3.5 0 0 1 3,-3.5z" fill="none" stroke="#1A95C8" stroke-width="2.2" stroke-linejoin="round"/>
<path d="M1854,239.5H1869M1854,244H1869M1854,248.5H1869M1854,253H1867" stroke="#1A95C8" stroke-width="1.4"/>
<!-- shapes halos -->
<ellipse cx="1669" cy="484" rx="48" ry="48" fill="url(#halo)"/>
<ellipse cx="1826" cy="482" rx="50" ry="55" fill="url(#halo)"/>
<ellipse cx="1669" cy="678" rx="48" ry="55" fill="url(#halo)"/>
<ellipse cx="1826" cy="672" rx="52" ry="45" fill="url(#halo)"/>
<ellipse cx="1669" cy="866" rx="52" ry="45" fill="url(#halo)"/>
<ellipse cx="1828" cy="864" rx="52" ry="48" fill="url(#halo)"/>
<!-- half sphere -->
<path d="M1635.8,497 C1635,470 1655,460.7 1669.5,460.7 C1690,460.7 1704,478 1703.6,495.6 C1702,508 1688,515.6 1670,515.6 C1650,515.6 1637,508 1635.8,497z" fill="url(#hs)" stroke="#8A0A55" stroke-width="0.8"/>
<!-- polygon -->
<polygon points="1789.6,443 1817.8,432.6 1852.6,437 1863,454.8 1860,516.3 1832.6,531.9 1797,523.7 1791,460.7" fill="#2E3F80" stroke="#1E2A55" stroke-width="1"/>
<polygon points="1789.6,443 1817.8,432.6 1852.6,437 1863,454.8 1833.3,467.4 1791,460.7" fill="#344D96" stroke="#1E2A55" stroke-width="0.9"/>
<polygon points="1833.3,467.4 1863,454.8 1860,516.3 1832.6,531.9" fill="#36509A" stroke="#1E2A55" stroke-width="0.9"/>
<!-- paraboloid -->
<path d="M1669,642 C1658,642 1648,665 1640,688 C1636,698 1636,706 1645,714 C1653,720 1662,722 1670,722 C1685,722 1698,715 1701.5,706 C1703,698 1699,690 1695,678 C1687,655 1680,642 1669,642z" fill="url(#pb)" stroke="#737373" stroke-width="1"/>
<!-- torus -->
<ellipse cx="1825.5" cy="675" rx="34.6" ry="23.7" fill="#0A9BD6" stroke="#06709E" stroke-width="0.8"/>
<ellipse cx="1825" cy="679" rx="26" ry="14" fill="none" stroke="#0886BE" stroke-width="3" opacity="0.5"/>
<ellipse cx="1824.5" cy="674.3" rx="15.3" ry="4.2" fill="#ECEDF0" stroke="#0770A0" stroke-width="1"/>
<!-- tube -->
<path d="M1634,861 V875.5 A35,19 0 0 0 1704,875.5 V861z" fill="url(#tu)" stroke="#8A4A10" stroke-width="0.8"/>
<ellipse cx="1669" cy="861" rx="35" ry="19" fill="#D97820" stroke="#8A4A10" stroke-width="0.8"/>
<ellipse cx="1669" cy="860" rx="17.5" ry="8.8" fill="#C4641A" stroke="#8A4A10" stroke-width="0.8"/>
<path d="M1652,861 A17.5,8.8 0 0 0 1686,861 A17.5,6 0 0 0 1652,861z" fill="#8F4810"/>
<!-- heart -->
<path d="M1793,850 C1793,838 1806,834 1815,837 C1821,839 1822.5,842 1832,842 C1840,840 1846,839 1852,841 C1862,844 1866,850 1865,858 L1864,871 C1862,880 1855,883 1845,886 L1815,896 L1795,876z" fill="#8E6A45" stroke="#4A3420" stroke-width="1"/>
<path d="M1793,850 C1796,858 1805,864 1814,873 L1815,896 L1795,876 C1793,868 1793,860 1793,850z" fill="#5C412A" stroke="#4A3420" stroke-width="0.8"/>
<path d="M1814,873 C1830,867 1855,862 1865,856" fill="none" stroke="#4A3420" stroke-width="0.8"/>
<!-- scrollbar -->
<rect x="1905" y="687.5" width="9" height="134" rx="4.5" fill="#C1C1C1"/>
<!-- separators -->
<rect x="1575" y="308.5" width="345" height="1" fill="#DADCE2"/>
<rect x="1581" y="408" width="332" height="1" fill="#DCDEE3"/>
</svg>
<div class="abs lbl" style="left:0;top:70px;width:114px">Workplane</div>
<div class="abs lbl" style="left:115px;top:70px;width:115px">Ruler</div>
<div class="abs lbl" style="left:230px;top:70px;width:115px">Notes</div>
<div class="abs" style="left:6.5px;top:107.5px;width:332px;height:76px;border:1px solid #E1E2E6;border-radius:3px;background:#F4F4F6;box-shadow:0 1px 3px rgba(0,0,0,0.06)"></div>
<div class="abs" style="left:20.5px;top:119px;font-size:14px;color:#4E5C6C;line-height:18px">Tinkercad</div>
<div class="abs" style="left:20.5px;top:145px;font-size:18.8px;color:#3D4D60;line-height:24px">Basic Shapes</div>
<svg class="abs" style="left:303px;top:142.5px" width="13" height="8" viewBox="0 0 13 8"><path d="M0 0h13L6.5 7.5z" fill="#000"/></svg>
<div class="abs lbl2" style="left:29.6px;top:334px;width:130px">Half Sphere</div>
<div class="abs lbl2" style="left:186px;top:334px;width:130px">Polygon</div>
<div class="abs lbl2" style="left:29.6px;top:527px;width:130px">Paraboloid</div>
<div class="abs lbl2" style="left:186px;top:527px;width:130px">Torus</div>
<div class="abs lbl2" style="left:29.6px;top:720px;width:130px">Tube</div>
<div class="abs lbl2" style="left:186px;top:720px;width:130px">Heart</div>
</div>
<div class="abs" style="left:1563px;top:556.2px;width:20px;height:58.5px;background:#F2F3F5;border:1px solid #D8DEE6;border-right:none"></div>
<svg class="abs" style="left:1567px;top:570px" width="14" height="32" viewBox="0 0 14 32"><path d="M3 2.5L11 16 3 29.5" fill="none" stroke="#111" stroke-width="2.7"/></svg>
<div id="dl">
<svg class="abs" style="left:25px;top:24px" width="20" height="20" viewBox="0 0 20 20"><path d="M10 1.2l7.8 4.4v8.8L10 18.8 2.2 14.4V5.6z" fill="#fff" stroke="#5F6368" stroke-width="1.6"/><path d="M10 4.5v6l-5 3" fill="none" stroke="#202124" stroke-width="1.6"/><path d="M10 10.5l5 3" stroke="#4FB3E8" stroke-width="1.8"/><path d="M10 4.5v6" stroke="#4FB3E8" stroke-width="1.8"/></svg>
<div class="abs" style="left:71.5px;top:24px;font-size:16.6px;color:#3C4043;line-height:22px;white-space:nowrap">micromotor model.stl</div>
<svg class="abs" style="left:260px;top:29px" width="14" height="9" viewBox="0 0 14 9"><path d="M1.5 7.5L7 2l5.5 5.5" fill="none" stroke="#5F6368" stroke-width="1.8"/></svg>
<div class="abs" style="left:295px;top:8px;width:1px;height:54px;background:#DADCE0"></div>
<div class="abs" style="left:1778.5px;top:14.5px;width:97px;height:39px;border:1px solid #DADCE0;border-radius:4px;color:#1A73E8;font-size:16px;line-height:37px;text-align:center;white-space:nowrap">Show all</div>
<svg class="abs" style="left:1891px;top:28px" width="13" height="13" viewBox="0 0 13 13"><path d="M1.5 1.5l10 10M11.5 1.5l-10 10" stroke="#5F6368" stroke-width="2"/></svg>
</div>
<div id="task">
<svg class="abs" style="left:19.5px;top:14px" width="21" height="22" viewBox="0 0 21 22" fill="#fff"><path d="M0.5 3.5L9.5 2.2V10.2H0.5z"/><path d="M10.5 2L20.5 0.5V10.2H10.5z"/><path d="M0.5 11.2H9.5V19.4L0.5 18.2z"/><path d="M10.5 11.2H20.5V21L10.5 19.6z"/></svg>
<div class="abs" style="left:60px;top:0;width:430px;height:50px;background:#F2F2F2;border-top:1px solid #D0D0D0"></div>
<svg class="abs" style="left:74px;top:14px" width="24" height="24" viewBox="0 0 24 24"><circle cx="14" cy="9.5" r="6.8" fill="none" stroke="#1A1A1A" stroke-width="1.7"/><path d="M9.2 14.3L2 21.5" stroke="#1A1A1A" stroke-width="1.8"/></svg>
<div class="abs" style="left:110px;top:13px;font-size:18.5px;color:#1E1E1E;line-height:24px;white-space:nowrap">Type here to search</div>
<svg class="abs" style="left:508px;top:15px" width="24" height="24" viewBox="0 0 24 24"><circle cx="12" cy="10" r="8.6" fill="none" stroke="#fff" stroke-width="2.2"/></svg>
<svg class="abs" style="left:568px;top:14px" width="24" height="22" viewBox="0 0 24 22" fill="none" stroke="#fff" stroke-width="1.5"><path d="M2 1V4H15V1M2 21V18H15V21"/><rect x="2" y="6.5" width="13" height="9"/><path d="M20.5 1V7M20.5 14V21"/><rect x="19" y="8" width="3" height="5" fill="#fff" stroke="none"/></svg>
<svg class="abs" style="left:629px;top:12px" width="30" height="25" viewBox="0 0 30 25"><path d="M0.5 2.5a2 2 0 0 1 2-2h7l2.5 2.5h15.5a2 2 0 0 1 2 2V22a2 2 0 0 1-2 2H2.5a2 2 0 0 1-2-2z" fill="#F8C94A"/><path d="M0.5 6h28.5V22a2 2 0 0 1-2 2H2.5a2 2 0 0 1-2-2z" fill="#FFD968"/><path d="M5.5 23.5V12.5a2 2 0 0 1 2-2h13a2 2 0 0 1 2 2V23.5h-4v-8h-9v8z" fill="#3B8EDE"/></svg>
<svg class="abs" style="left:690px;top:9px" width="31" height="32" viewBox="0 0 31 32"><path d="M9 9V5.5a4 4 0 0 1 4-4h5a4 4 0 0 1 4 4V9" fill="none" stroke="#E6E6E6" stroke-width="2.2"/><rect x="0.5" y="8" width="30" height="23.5" rx="1.5" fill="#F4F4F4"/><rect x="9.5" y="14" width="5.5" height="5.5" fill="#F25022"/><rect x="16" y="14" width="5.5" height="5.5" fill="#7FBA00"/><rect x="9.5" y="20.5" width="5.5" height="5.5" fill="#00A4EF"/><rect x="16" y="20.5" width="5.5" height="5.5" fill="#FFB900"/></svg>
<svg class="abs" style="left:753px;top:11px" width="29" height="29" viewBox="0 0 29 29"><defs><linearGradient id="stg" x1="0" y1="0" x2="0" y2="1"><stop offset="0" stop-color="#111D4E"/><stop offset="1" stop-color="#1375BD"/></linearGradient></defs><circle cx="14.5" cy="14.5" r="14" fill="url(#stg)"/><circle cx="19" cy="10.5" r="4.2" fill="none" stroke="#fff" stroke-width="2"/><path d="M0.8 16.5l7 3" stroke="#fff" stroke-width="3.6"/><circle cx="9.5" cy="19.5" r="3.2" fill="none" stroke="#fff" stroke-width="1.8"/><path d="M11 18l5-5" stroke="#fff" stroke-width="2.2"/></svg>
<svg class="abs" style="left:814px;top:9.5px" width="32" height="31" viewBox="0 0 32 31"><rect x="2" y="1" width="28" height="29.5" rx="3" fill="#15171A"/><path d="M1 3l3 2v18l-3 4z" fill="#1DBDE0"/><path d="M31 3l-3 2v18l3 4z" fill="#1DBDE0"/><path d="M7 6l9 8 9-8-2 14-3 5-4-4-4 4-3-5z" fill="#4B4F55"/><path d="M11 10l5 5 5-5-1 8-4 3-4-3z" fill="#2A2D31"/></svg>
<svg class="abs" style="left:876px;top:10.5px" width="32" height="30" viewBox="0 0 32 30"><path d="M1 11L16 1l15 10v18H1z" fill="#1B74C9"/><path d="M1 11l15 10 15-10v18H1z" fill="#35A5F0"/><path d="M4 9h24l-12 8z" fill="#F2F5F8"/><path d="M1 29l15-9 15 9z" fill="#5BBDF8"/></svg>
<div class="abs" style="left:896px;top:22.5px;width:23px;height:23px;border-radius:50%;background:#25282B;border:1.5px solid #C8C8C8;color:#fff;font-size:15px;font-weight:bold;text-align:center;line-height:20px">59</div>
<div class="abs" style="left:924px;top:0;width:61px;height:50px;background:#4C4744"></div>
<div class="abs" style="left:924px;top:47px;width:61px;height:3px;background:#76B9ED"></div>
<svg class="abs" style="left:939.5px;top:10.5px" width="28.5" height="28.5" viewBox="0 0 28 28"><circle cx="14" cy="14" r="13.5" fill="#DB4437"/><path d="M14 14L2.3 7.2A13.5 13.5 0 0 0 7.2 25.7z" fill="#0F9D58"/><path d="M14 14L7.2 25.7A13.5 13.5 0 0 0 27.5 14V14 7.2z" fill="#FFCD40"/><path d="M14 7.5h12.4A13.5 13.5 0 0 1 27.5 14 13.5 13.5 0 0 1 20.5 25.8L14 14z" fill="#FFCD40"/><path d="M2.3 7.2A13.5 13.5 0 0 1 26.4 7.5H14z" fill="#DB4437"/><circle cx="14" cy="14" r="6.2" fill="#fff"/><circle cx="14" cy="14" r="4.9" fill="#4285F4"/></svg>
<svg class="abs" style="left:1001px;top:9.7px" width="30.5" height="30.5" viewBox="0 0 30 30"><rect width="30" height="30" fill="#F9DCC0"/><path d="M0 22q15-6 30 0v8H0z" fill="#F3C9A2"/><path d="M10 4h12l-1 5h-7v5h6l-1 4h-5v8l-4 1z" fill="#E07B18"/><path d="M14 4h8l-1 5h-7z" fill="#F39A33"/><text x="22" y="28" font-size="6" fill="#E98A2E" font-family="Liberation Sans" text-anchor="middle">360</text></svg>
<svg class="abs" style="left:1064px;top:11px" width="27.5" height="27.5" viewBox="0 0 28 28"><circle cx="14" cy="14" r="13.5" fill="#0E9C9E"/><g fill="none" stroke="#fff" stroke-width="2"><path d="M7.5 10.5a3.5 3.5 0 1 0 0 7c2.5 0 4-2 6.5-3.5-2.5-1.5-4-3.5-6.5-3.5zM20.5 10.5a3.5 3.5 0 1 1 0 7c-2.5 0-4-2-6.5-3.5 2.5-1.5 4-3.5 6.5-3.5z"/></g><path d="M6 14h3M19 14h3M20.5 12.5v3" stroke="#fff" stroke-width="1.2"/></svg>
<svg class="abs" style="left:1125.5px;top:10.5px" width="28.5" height="28.5" viewBox="0 0 28 28"><rect width="28" height="28" rx="7" fill="#4C8DFB"/><rect x="5" y="9" width="13" height="10.5" rx="2" fill="#fff"/><path d="M18.5 12.5l5-3.5v10l-5-3.5z" fill="#fff"/></svg>
<svg class="abs" style="left:1513px;top:19.5px" width="18" height="10" viewBox="0 0 18 10"><path d="M1 9L9 1.5 17 9" fill="none" stroke="#fff" stroke-width="1.4"/></svg>
<svg class="abs" style="left:1545px;top:15px" width="16" height="19" viewBox="0 0 16 19" fill="none" stroke="#fff" stroke-width="1.2"><rect x="1.5" y="5.5" width="8" height="8"/><path d="M9.5 8l5-2.5v8l-5-2.5"/><path d="M3 2.5a6 4 0 0 1 9 0M3 16.5a6 4 0 0 0 9 0" stroke-dasharray="3 2"/></svg>
<svg class="abs" style="left:1571px;top:18px" width="22" height="14" viewBox="0 0 22 14"><path d="M5 13.5a4.5 4.5 0 0 1-.5-9A6 6 0 0 1 15.5 4a4.8 4.8 0 0 1 1.5 9.5z" fill="#E8E8E8"/><path d="M4.5 6a6 6 0 0 1 11-2" fill="none" stroke="#BDBDBD" stroke-width="1"/></svg>
<svg class="abs" style="left:1601px;top:17.5px" width="22" height="14" viewBox="0 0 22 14" fill="none" stroke="#fff" stroke-width="1.3"><rect x="4.5" y="3.5" width="15" height="9" rx="0.5"/><rect x="6" y="5" width="12" height="6" fill="#fff" stroke="none"/><path d="M20 6.5v3"/><path d="M0.5 3h3M2 1v4"/></svg>
<svg class="abs" style="left:1634px;top:17px" width="18" height="16" viewBox="0 0 18 16" fill="none" stroke="#fff" stroke-width="1.3"><path d="M1 15A14 14 0 0 1 15 1M4.5 15A10.5 10.5 0 0 1 15 4.5M8 15a7 7 0 0 1 7-7"/><circle cx="14.5" cy="14.5" r="1.3" fill="#fff" stroke="none"/></svg>
<svg class="abs" style="left:1661px;top:16px" width="22" height="18" viewBox="0 0 22 18" fill="none" stroke="#fff" stroke-width="1.3"><path d="M1 6h4l5-4.5v15L5 12H1z"/><path d="M13 6.5a3 3 0 0 1 0 5M15.5 4a6.5 6.5 0 0 1 0 10M18 1.5a10 10 0 0 1 0 15"/></svg>
<svg class="abs" style="left:1692px;top:16px" width="20" height="19" viewBox="0 0 20 19"><path d="M5 0.5l5 3-5 3-5-3zM15 0.5l5 3-5 3-5-3zM5 6.5l5 3-5 3-5-3zM15 6.5l5 3-5 3-5-3zM10 10l5 3-5 3-5-3z" fill="#fff"/><rect x="0" y="8.5" width="10" height="10.5" fill="#D0102A"/><text x="5" y="17.5" font-size="9.5" font-weight="bold" fill="#fff" font-family="Liberation Sans" text-anchor="middle">3</text></svg>
<div class="abs" style="left:1725px;top:17px;font-size:14.6px;color:#fff;line-height:18px">ENG</div>
<div class="abs" style="left:1770px;top:4px;width:76px;font-size:15.4px;color:#fff;line-height:18px;text-align:center">21:25</div>
<div class="abs" style="left:1768px;top:27px;width:80px;font-size:15.4px;color:#fff;line-height:18px;text-align:center">04/04/2021</div>
<svg class="abs" style="left:1869px;top:15px" width="21" height="18" viewBox="0 0 21 18"><path d="M0.5 0.5h20v13h-13l-4 4v-4H0.5z" fill="#fff"/><path d="M4 4h13M4 7h13M4 10h9" stroke="#2A2520" stroke-width="1"/></svg>
<div class="abs" style="left:1877.5px;top:23.5px;width:23px;height:23px;border-radius:50%;background:#2A2A2A;border:1.5px solid #B8B8B8;color:#fff;font-size:14px;font-weight:bold;text-align:center;line-height:20px">14</div>
<div class="abs" style="left:1914px;top:0;width:1px;height:50px;background:#5A5550"></div>
</div>
</body></html>
